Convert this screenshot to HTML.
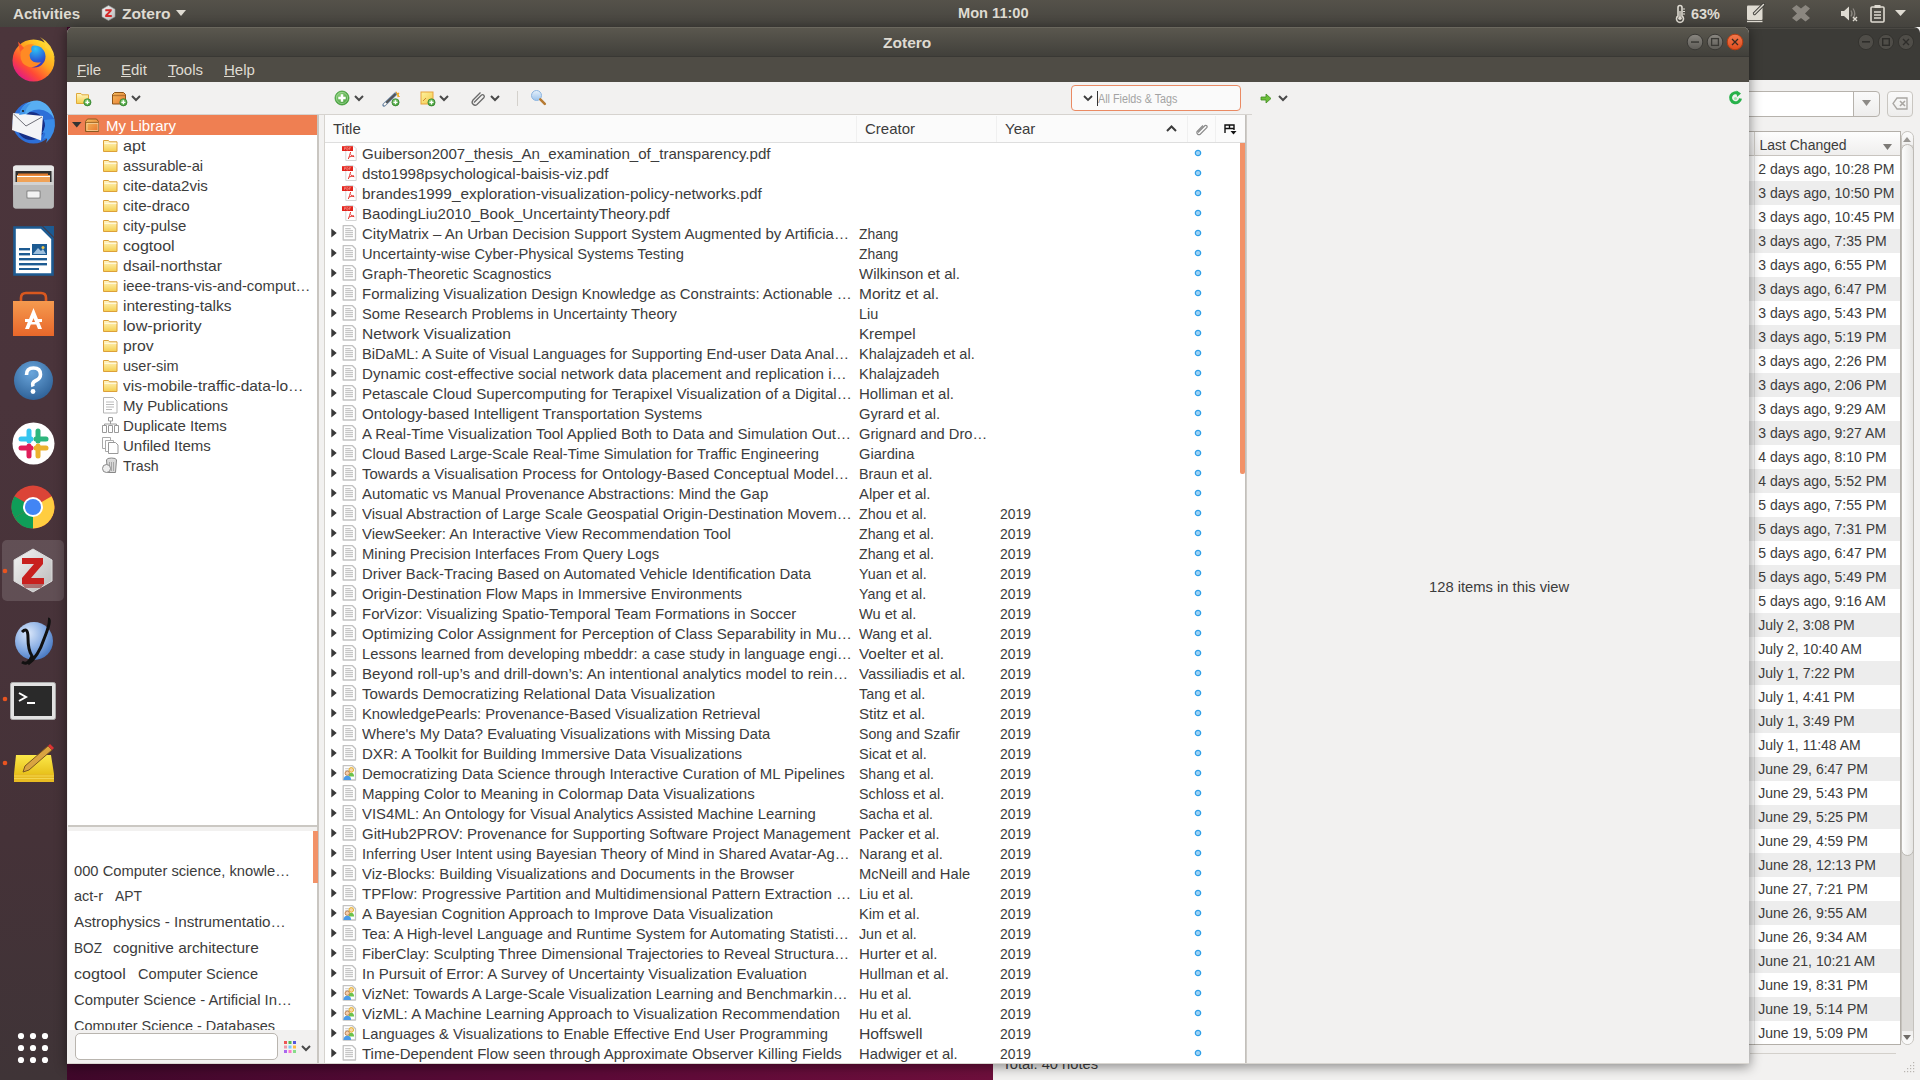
<!DOCTYPE html><html><head><meta charset="utf-8"><title>Zotero</title><style>
*{margin:0;padding:0;box-sizing:border-box}
html,body{width:1920px;height:1080px;overflow:hidden}
body{position:relative;font-family:"Liberation Sans", sans-serif;background:#2c0a1e}
.a{position:absolute}
.t{position:absolute;white-space:nowrap;line-height:1;transform-origin:0 0}
.ic{position:absolute;overflow:visible}
</style></head><body>
<svg width="0" height="0" style="position:absolute"><defs>
<linearGradient id="gFold" x1="0" y1="0" x2="0" y2="1"><stop offset="0" stop-color="#fff6c4"/><stop offset="1" stop-color="#f5cf4e"/></linearGradient>
<linearGradient id="gBox" x1="0" y1="0" x2="1" y2="1"><stop offset="0" stop-color="#f6c060"/><stop offset="1" stop-color="#e8752e"/></linearGradient>
<radialGradient id="gGreen" cx=".4" cy=".35" r=".7"><stop offset="0" stop-color="#8fd27e"/><stop offset="1" stop-color="#3e9a35"/></radialGradient>
<linearGradient id="gBtn" x1="0" y1="0" x2="0" y2="1"><stop offset="0" stop-color="#8a8781"/><stop offset="1" stop-color="#5d5b56"/></linearGradient>
<linearGradient id="gClose" x1="0" y1="0" x2="0" y2="1"><stop offset="0" stop-color="#f47a4e"/><stop offset="1" stop-color="#de4b1c"/></linearGradient>
<linearGradient id="gBtnBg" x1="0" y1="0" x2="0" y2="1"><stop offset="0" stop-color="#5e5c57"/><stop offset="1" stop-color="#4a4944"/></linearGradient>
<radialGradient id="gFF" cx=".75" cy=".2" r="1"><stop offset="0" stop-color="#fff44f"/><stop offset=".35" stop-color="#ff9a2e"/><stop offset=".7" stop-color="#ff3f3f"/><stop offset="1" stop-color="#c9178a"/></radialGradient>
<radialGradient id="gFFin" cx=".6" cy=".3" r=".8"><stop offset="0" stop-color="#3fbcf2"/><stop offset=".6" stop-color="#3a5ed9"/><stop offset="1" stop-color="#6a2bc7"/></radialGradient>
<radialGradient id="gTB" cx=".5" cy=".3" r=".8"><stop offset="0" stop-color="#9ad4ff"/><stop offset=".5" stop-color="#2f8ae6"/><stop offset="1" stop-color="#1c3a9a"/></radialGradient>
<linearGradient id="gCab" x1="0" y1="0" x2="0" y2="1"><stop offset="0" stop-color="#dedede"/><stop offset="1" stop-color="#9c9c9c"/></linearGradient>
<linearGradient id="gBag" x1="0" y1="0" x2="0" y2="1"><stop offset="0" stop-color="#f59a4f"/><stop offset="1" stop-color="#e8672a"/></linearGradient>
<radialGradient id="gHelp" cx=".45" cy=".3" r=".8"><stop offset="0" stop-color="#6aa6dc"/><stop offset="1" stop-color="#27598f"/></radialGradient>
<radialGradient id="gSph" cx=".35" cy=".3" r=".8"><stop offset="0" stop-color="#dbe8fb"/><stop offset=".6" stop-color="#7ea6e0"/><stop offset="1" stop-color="#3d6fbb"/></radialGradient>
<linearGradient id="gHex" x1="0" y1="0" x2="1" y2="1"><stop offset="0" stop-color="#f4f4f4"/><stop offset="1" stop-color="#b9b9b9"/></linearGradient>
<linearGradient id="gPad" x1="0" y1="0" x2="0" y2="1"><stop offset="0" stop-color="#fbe84a"/><stop offset="1" stop-color="#e8c21c"/></linearGradient>
<linearGradient id="gLens" x1="0" y1="0" x2="0" y2="1"><stop offset="0" stop-color="#e6f1fb"/><stop offset="1" stop-color="#9cc3ec"/></linearGradient>
<linearGradient id="gNote" x1="0" y1="0" x2="1" y2="1"><stop offset="0" stop-color="#fff3a0"/><stop offset="1" stop-color="#f1c94a"/></linearGradient>
</defs></svg>
<div class="a" style="left:0px;top:0px;width:1920px;height:1080px;background:linear-gradient(90deg,#3f082a 60px,#520a34 400px,#5d0a38 600px,#6e0f3c 993px,#6a1434 1920px);"></div>
<div class="a" style="left:993px;top:27px;width:927px;height:1053px;background:#f2f1f0;"></div>
<div class="a" style="left:993px;top:27px;width:927px;height:53px;background:#3c3b37;border-radius:6px 6px 0 0"></div>
<div class="a" style="left:997px;top:28px;width:919px;height:1px;background:#4a4843;"></div>
<svg class="ic" style="left:1857px;top:33px" width="18" height="18" viewBox="0 0 18 18"><circle cx="9" cy="9" r="7.6" fill="#4f4d48" stroke="#34332f" stroke-width="1"/></svg>
<svg class="ic" style="left:1877px;top:33px" width="18" height="18" viewBox="0 0 18 18"><circle cx="9" cy="9" r="7.6" fill="#4f4d48" stroke="#34332f" stroke-width="1"/></svg>
<svg class="ic" style="left:1897px;top:33px" width="18" height="18" viewBox="0 0 18 18"><circle cx="9" cy="9" r="7.6" fill="#4f4d48" stroke="#34332f" stroke-width="1"/></svg>
<svg class="ic" style="left:1862px;top:41px" width="8" height="2" viewBox="0 0 8 2"><rect width="8" height="1.6" fill="#2e2d2a"/></svg>
<svg class="ic" style="left:1882px;top:38px" width="8" height="8" viewBox="0 0 8 8"><rect x=".7" y=".7" width="6.6" height="6.6" fill="none" stroke="#2e2d2a" stroke-width="1.4"/></svg>
<svg class="ic" style="left:1902px;top:38px" width="8" height="8" viewBox="0 0 8 8"><path d="M1 1l6 6M7 1l-6 6" stroke="#2e2d2a" stroke-width="1.4"/></svg>
<div class="a" style="left:1700px;top:91px;width:154px;height:26px;background:#fff;border:1px solid #b6b2ac;border-right:none"></div>
<div class="a" style="left:1853px;top:91px;width:27px;height:26px;background:linear-gradient(#fafafa,#eeedec);border:1px solid #b6b2ac;border-radius:0 4px 4px 0"></div>
<svg class="ic" style="left:1862px;top:100px" width="9" height="7" viewBox="0 0 9 7"><path d="M0 0h9L4.5 6z" fill="#8c8a86"/></svg>
<div class="a" style="left:1887px;top:91px;width:26px;height:26px;background:linear-gradient(#fafafa,#eeedec);border:1px solid #c9c6c1;border-radius:4px"></div>
<svg class="ic" style="left:1892px;top:96px" width="16" height="15" viewBox="0 0 16 15"><path d="M5 2h10v11H5L1 7.5z" fill="none" stroke="#a9a6a2" stroke-width="1.3"/><path d="M8 5l5 5M13 5l-5 5" stroke="#a9a6a2" stroke-width="1.6"/></svg>
<div class="a" style="left:1700px;top:131px;width:201px;height:914px;background:#fff;border:1px solid #b3afa9"></div>
<div class="a" style="left:1701px;top:132px;width:199px;height:24px;background:linear-gradient(#fdfdfd,#efeeed);border-bottom:1px solid #c8c4bf"></div>
<div class="a" style="left:1754px;top:132px;width:1px;height:24px;background:#d2cfca;"></div>
<div class="t" style="left:1759.40px;top:137.95px;font-size:14px;color:#3c3c3c;">Last Changed</div>
<svg class="ic" style="left:1883px;top:144px" width="9" height="6" viewBox="0 0 9 6"><path d="M0 0h9L4.5 6z" fill="#7c7a76"/></svg>
<div class="t" style="left:1758.30px;top:162.05px;font-size:14px;color:#3c3c3c;">2 days ago, 10:28 PM</div>
<div class="a" style="left:1701px;top:181px;width:199px;height:24px;background:#ededed;"></div>
<div class="t" style="left:1758.30px;top:186.05px;font-size:14px;color:#3c3c3c;">3 days ago, 10:50 PM</div>
<div class="t" style="left:1758.30px;top:210.05px;font-size:14px;color:#3c3c3c;">3 days ago, 10:45 PM</div>
<div class="a" style="left:1701px;top:229px;width:199px;height:24px;background:#ededed;"></div>
<div class="t" style="left:1758.30px;top:234.05px;font-size:14px;color:#3c3c3c;">3 days ago, 7:35 PM</div>
<div class="t" style="left:1758.30px;top:258.05px;font-size:14px;color:#3c3c3c;">3 days ago, 6:55 PM</div>
<div class="a" style="left:1701px;top:277px;width:199px;height:24px;background:#ededed;"></div>
<div class="t" style="left:1758.30px;top:282.05px;font-size:14px;color:#3c3c3c;">3 days ago, 6:47 PM</div>
<div class="t" style="left:1758.30px;top:306.05px;font-size:14px;color:#3c3c3c;">3 days ago, 5:43 PM</div>
<div class="a" style="left:1701px;top:325px;width:199px;height:24px;background:#ededed;"></div>
<div class="t" style="left:1758.30px;top:330.05px;font-size:14px;color:#3c3c3c;">3 days ago, 5:19 PM</div>
<div class="t" style="left:1758.30px;top:354.05px;font-size:14px;color:#3c3c3c;">3 days ago, 2:26 PM</div>
<div class="a" style="left:1701px;top:373px;width:199px;height:24px;background:#ededed;"></div>
<div class="t" style="left:1758.30px;top:378.05px;font-size:14px;color:#3c3c3c;">3 days ago, 2:06 PM</div>
<div class="t" style="left:1758.30px;top:402.05px;font-size:14px;color:#3c3c3c;">3 days ago, 9:29 AM</div>
<div class="a" style="left:1701px;top:421px;width:199px;height:24px;background:#ededed;"></div>
<div class="t" style="left:1758.30px;top:426.05px;font-size:14px;color:#3c3c3c;">3 days ago, 9:27 AM</div>
<div class="t" style="left:1758.30px;top:450.05px;font-size:14px;color:#3c3c3c;">4 days ago, 8:10 PM</div>
<div class="a" style="left:1701px;top:469px;width:199px;height:24px;background:#ededed;"></div>
<div class="t" style="left:1758.30px;top:474.05px;font-size:14px;color:#3c3c3c;">4 days ago, 5:52 PM</div>
<div class="t" style="left:1758.30px;top:498.05px;font-size:14px;color:#3c3c3c;">5 days ago, 7:55 PM</div>
<div class="a" style="left:1701px;top:517px;width:199px;height:24px;background:#ededed;"></div>
<div class="t" style="left:1758.30px;top:522.05px;font-size:14px;color:#3c3c3c;">5 days ago, 7:31 PM</div>
<div class="t" style="left:1758.30px;top:546.05px;font-size:14px;color:#3c3c3c;">5 days ago, 6:47 PM</div>
<div class="a" style="left:1701px;top:565px;width:199px;height:24px;background:#ededed;"></div>
<div class="t" style="left:1758.30px;top:570.05px;font-size:14px;color:#3c3c3c;">5 days ago, 5:49 PM</div>
<div class="t" style="left:1758.30px;top:594.05px;font-size:14px;color:#3c3c3c;">5 days ago, 9:16 AM</div>
<div class="a" style="left:1701px;top:613px;width:199px;height:24px;background:#ededed;"></div>
<div class="t" style="left:1758.30px;top:618.05px;font-size:14px;color:#3c3c3c;">July 2, 3:08 PM</div>
<div class="t" style="left:1758.30px;top:642.05px;font-size:14px;color:#3c3c3c;">July 2, 10:40 AM</div>
<div class="a" style="left:1701px;top:661px;width:199px;height:24px;background:#ededed;"></div>
<div class="t" style="left:1758.30px;top:666.05px;font-size:14px;color:#3c3c3c;">July 1, 7:22 PM</div>
<div class="t" style="left:1758.30px;top:690.05px;font-size:14px;color:#3c3c3c;">July 1, 4:41 PM</div>
<div class="a" style="left:1701px;top:709px;width:199px;height:24px;background:#ededed;"></div>
<div class="t" style="left:1758.30px;top:714.05px;font-size:14px;color:#3c3c3c;">July 1, 3:49 PM</div>
<div class="t" style="left:1758.30px;top:738.05px;font-size:14px;color:#3c3c3c;">July 1, 11:48 AM</div>
<div class="a" style="left:1701px;top:757px;width:199px;height:24px;background:#ededed;"></div>
<div class="t" style="left:1758.30px;top:762.05px;font-size:14px;color:#3c3c3c;">June 29, 6:47 PM</div>
<div class="t" style="left:1758.30px;top:786.05px;font-size:14px;color:#3c3c3c;">June 29, 5:43 PM</div>
<div class="a" style="left:1701px;top:805px;width:199px;height:24px;background:#ededed;"></div>
<div class="t" style="left:1758.30px;top:810.05px;font-size:14px;color:#3c3c3c;">June 29, 5:25 PM</div>
<div class="t" style="left:1758.30px;top:834.05px;font-size:14px;color:#3c3c3c;">June 29, 4:59 PM</div>
<div class="a" style="left:1701px;top:853px;width:199px;height:24px;background:#ededed;"></div>
<div class="t" style="left:1758.30px;top:858.05px;font-size:14px;color:#3c3c3c;">June 28, 12:13 PM</div>
<div class="t" style="left:1758.30px;top:882.05px;font-size:14px;color:#3c3c3c;">June 27, 7:21 PM</div>
<div class="a" style="left:1701px;top:901px;width:199px;height:24px;background:#ededed;"></div>
<div class="t" style="left:1758.30px;top:906.05px;font-size:14px;color:#3c3c3c;">June 26, 9:55 AM</div>
<div class="t" style="left:1758.30px;top:930.05px;font-size:14px;color:#3c3c3c;">June 26, 9:34 AM</div>
<div class="a" style="left:1701px;top:949px;width:199px;height:24px;background:#ededed;"></div>
<div class="t" style="left:1758.30px;top:954.05px;font-size:14px;color:#3c3c3c;">June 21, 10:21 AM</div>
<div class="t" style="left:1758.30px;top:978.05px;font-size:14px;color:#3c3c3c;">June 19, 8:31 PM</div>
<div class="a" style="left:1701px;top:997px;width:199px;height:24px;background:#ededed;"></div>
<div class="t" style="left:1758.30px;top:1002.05px;font-size:14px;color:#3c3c3c;">June 19, 5:14 PM</div>
<div class="t" style="left:1758.30px;top:1026.05px;font-size:14px;color:#3c3c3c;">June 19, 5:09 PM</div>
<div class="a" style="left:1754px;top:156px;width:1px;height:889px;background:rgba(0,0,0,.08);"></div>
<div class="a" style="left:1901px;top:131px;width:13px;height:914px;background:#dcdad7;border:1px solid #c5c2bd;border-radius:7px"></div>
<div class="a" style="left:1902px;top:132px;width:11px;height:13px;background:linear-gradient(#fbfbfb,#f0efee);border-radius:6px 6px 0 0"></div>
<div class="a" style="left:1902px;top:1031px;width:11px;height:13px;background:linear-gradient(#f0efee,#fbfbfb);border-radius:0 0 6px 6px"></div>
<div class="a" style="left:1901px;top:144px;width:13px;height:712px;background:linear-gradient(90deg,#fdfdfd,#e6e5e3);border:1px solid #bdbab5;border-radius:7px"></div>
<svg class="ic" style="left:1903px;top:137px" width="8" height="5" viewBox="0 0 8 5"><path d="M0 5h8L4 0z" fill="#9a9793"/></svg>
<svg class="ic" style="left:1903px;top:1035px" width="8" height="5" viewBox="0 0 8 5"><path d="M0 0h8L4 5z" fill="#6f6c68"/></svg>
<div class="a" style="left:1750px;top:1053px;width:146px;height:1px;background:#d3d0cb;"></div>
<div class="t" style="left:1002.50px;top:1056.56px;font-size:14.7px;color:#3c3c3c;">Total: 40 notes</div>
<svg class="ic" style="left:1903px;top:1062px" width="11" height="11" viewBox="0 0 11 11"><rect x="10" y="0" width="1.2" height="1.2" fill="#b8b5b0"/><rect x="10" y="3" width="1.2" height="1.2" fill="#b8b5b0"/><rect x="7" y="3" width="1.2" height="1.2" fill="#b8b5b0"/><rect x="10" y="6" width="1.2" height="1.2" fill="#b8b5b0"/><rect x="7" y="6" width="1.2" height="1.2" fill="#b8b5b0"/><rect x="4" y="6" width="1.2" height="1.2" fill="#b8b5b0"/><rect x="10" y="9" width="1.2" height="1.2" fill="#b8b5b0"/><rect x="7" y="9" width="1.2" height="1.2" fill="#b8b5b0"/><rect x="4" y="9" width="1.2" height="1.2" fill="#b8b5b0"/><rect x="1" y="9" width="1.2" height="1.2" fill="#b8b5b0"/></svg>
<div class="a" style="left:0px;top:0px;width:1920px;height:27px;background:linear-gradient(#55524a,#45433e);"></div>
<div class="t" style="left:12.50px;top:5.80px;font-size:15px;color:#dfdbd2;font-weight:bold;transform:scaleX(1.0047);">Activities</div>
<svg class="ic" style="left:101px;top:5px" width="15" height="16" viewBox="0 0 15 16"><path d="M7.5 .5l6.5 3.7v7.6l-6.5 3.7L1 11.8V4.2z" fill="url(#gHex)" stroke="#9a9a9a" stroke-width=".6"/><path d="M4.3 4.3h6.4v1.8L7 10h3.8v1.9H4.2v-1.8L8 6.2H4.3z" fill="#d42a2a"/></svg>
<div class="t" style="left:122.00px;top:5.80px;font-size:15px;color:#dfdbd2;font-weight:bold;transform:scaleX(1.0394);">Zotero</div>
<svg class="ic" style="left:176px;top:10px" width="10" height="6" viewBox="0 0 10 6"><path d="M0 0h10L5 6z" fill="#dfdbd2"/></svg>
<div class="t" style="left:958.40px;top:4.80px;font-size:15px;color:#dfdbd2;font-weight:bold;transform:scaleX(0.9736);">Mon 11:00</div>
<svg class="ic" style="left:1674px;top:5px" width="12" height="17" viewBox="0 0 12 17"><path d="M4 2.5a2 2 0 0 1 4 0v8.5a3.5 3.5 0 1 1-4 0z" fill="none" stroke="#dfdbd2" stroke-width="1.6"/><circle cx="6" cy="13.3" r="1.8" fill="#dfdbd2"/><path d="M6 6v7" stroke="#dfdbd2" stroke-width="1.4"/><path d="M9 4h2M9 6.5h2M9 9h2" stroke="#dfdbd2" stroke-width="1"/></svg>
<div class="t" style="left:1691.00px;top:5.80px;font-size:15px;color:#dfdbd2;font-weight:bold;transform:scaleX(0.9660);">63%</div>
<svg class="ic" style="left:1746px;top:3px" width="20" height="19" viewBox="0 0 20 19"><rect x="1" y="2.5" width="15.5" height="14.5" rx="1" fill="#dfdbd2"/><rect x="1" y="17.8" width="15.5" height="1.4" fill="#dfdbd2"/><path d="M8.5 10.5l9-9" stroke="#3f3e3a" stroke-width="3.2" stroke-linecap="round"/><path d="M8.5 10.5l9-9" stroke="#dfdbd2" stroke-width="1.4" stroke-linecap="round"/></svg>
<svg class="ic" style="left:1792px;top:5px" width="18" height="17" viewBox="0 0 18 17"><path d="M0 3.5L4.5 0 9 3.5 13.5 0 18 3.5 13 8.5 18 13 13.5 16.5 9 13 4.5 16.5 0 13 5 8.5z" fill="#8b8780"/></svg>
<svg class="ic" style="left:1840px;top:5px" width="18" height="17" viewBox="0 0 18 17"><path d="M1 6h3l5-4.5v14L4 11H1z" fill="#dfdbd2"/><path d="M11 5.5q2 3 0 6M13 3.5q3.5 5 0 10" stroke="#8b8780" stroke-width="1.3" fill="none"/><path d="M13 12l4 4M17 12l-4 4" stroke="#dfdbd2" stroke-width="1.4"/></svg>
<svg class="ic" style="left:1870px;top:4px" width="15" height="18" viewBox="0 0 15 18"><rect x="1" y="3" width="13" height="15" rx="1" fill="none" stroke="#dfdbd2" stroke-width="1.6"/><rect x="4.5" y="1" width="6" height="3" fill="#dfdbd2"/><path d="M4 8h7M4 11h7M4 14h7" stroke="#dfdbd2" stroke-width="1.3"/></svg>
<svg class="ic" style="left:1895px;top:10px" width="11" height="6" viewBox="0 0 11 6"><path d="M0 0h11L5.5 6z" fill="#dfdbd2"/></svg>
<div class="a" style="left:0px;top:27px;width:67px;height:1053px;background:linear-gradient(#4b353b 0px,#4a343b 373px,#453238 813px,#3f3437 1053px);"></div>
<svg class="ic" style="left:11px;top:36px" width="44" height="45" viewBox="0 0 44 45"><defs><linearGradient id="gFF2" x1=".85" y1=".1" x2=".15" y2=".9"><stop offset="0" stop-color="#ffe02b"/><stop offset=".4" stop-color="#ffa21f"/><stop offset=".72" stop-color="#ff4a35"/><stop offset="1" stop-color="#e0178a"/></linearGradient>
<radialGradient id="gGlobe" cx=".55" cy=".15" r=".95"><stop offset="0" stop-color="#2ec5f7"/><stop offset=".55" stop-color="#2a5fd6"/><stop offset="1" stop-color="#4b1fa3"/></radialGradient></defs>
<circle cx="22.5" cy="24.5" r="21" fill="url(#gFF2)"/>
<circle cx="23.5" cy="20.5" r="11" fill="url(#gGlobe)"/>
<path d="M11 13Q15 7 23 8.5 18.5 11.5 21 15.5 17 17.5 19.5 23 23 28 30 26 26 32 18 31 9 28 9.5 19z" fill="#ff8a24"/>
<path d="M29 1Q42 8 44 23 41 14 34 11.5 35 6 29 1z" fill="#ffd23a"/>
<path d="M7 5.5L13 12 9 16z" fill="#ff5b2c"/></svg>
<svg class="ic" style="left:10px;top:98px" width="46" height="49" viewBox="0 0 46 49"><circle cx="23.5" cy="24.5" r="21" fill="#2d6fd8"/>
<circle cx="21" cy="28" r="14" fill="#172f86"/>
<path d="M9 17Q13 3 27 2.5 40 4 44.5 21 39 12 29 11.5 18 11.5 14 20z" fill="#58aef2"/>
<path d="M44.5 21Q47 35 36 45 39 38 33 41 38 33 32 35 37 28 34 22z" fill="#3a8ce8"/>
<path d="M3 15l30 3-2 24.5L2 32z" fill="#f4f4f6"/>
<path d="M3.5 16L16 28 32 19" fill="none" stroke="#6f6f78" stroke-width="1"/>
<path d="M9 17Q12 6 21 5 16 9 15 16z" fill="#3f94e8"/><circle cx="13" cy="13" r="1.1" fill="#222"/></svg>
<svg class="ic" style="left:12px;top:165px" width="43" height="44" viewBox="0 0 43 44"><rect x="1" y="0.5" width="41" height="43" rx="3" fill="url(#gCab)"/>
<rect x="1" y="0.5" width="41" height="6" rx="3" fill="#e9e9e9"/>
<rect x="3.5" y="6" width="36" height="11" fill="#2f2f2f"/>
<path d="M5 10h33v7H5z" fill="#f0a257"/><path d="M5 11.5h33" stroke="#fff" stroke-width="1.2"/><path d="M6 8.5h30v2H6z" fill="#e07a2e"/>
<path d="M1.5 17h40v24.5a2 2 0 0 1-2 2h-36a2 2 0 0 1-2-2z" fill="#b9b9b9"/>
<path d="M1.5 17h40v3h-40z" fill="#d2d2d2"/>
<rect x="14" y="25" width="15" height="9" rx="2" fill="#9a9a9a"/><rect x="15.5" y="26.5" width="12" height="6" rx="1" fill="#f2f2f2"/></svg>
<svg class="ic" style="left:13px;top:226px" width="42" height="50" viewBox="0 0 42 50"><path d="M1.5 1.5h27l11 11v36h-38z" fill="#fff" stroke="#1d5b92" stroke-width="2.6"/>
<path d="M30 0h11v11z" fill="#1d5b92"/>
<rect x="6" y="22" width="11" height="2.4" fill="#1d5b92"/><rect x="6" y="27" width="11" height="2.4" fill="#1d5b92"/>
<rect x="19" y="18" width="15" height="11" fill="#1d5b92"/><path d="M20 28l5-6 3 3 2-2 3 5z" fill="#9ec0de"/><circle cx="30" cy="21.5" r="1.5" fill="#f2c84b"/>
<rect x="6" y="32" width="28" height="2.4" fill="#1d5b92"/><rect x="6" y="37" width="28" height="2.4" fill="#1d5b92"/><rect x="6" y="42" width="20" height="2" fill="#1d5b92"/></svg>
<svg class="ic" style="left:12px;top:292px" width="43" height="45" viewBox="0 0 43 45"><path d="M9 10V6q0-5 5-5h15q5 0 5 5v4" fill="none" stroke="#d9581f" stroke-width="2.6"/>
<path d="M1 9h41v35H1z" fill="url(#gBag)"/>
<path d="M21.5 16L13 37h4l1.8-4.5h5.4L26 37h4z" fill="#fff"/><rect x="13" y="27" width="17" height="3" fill="#fff"/><path d="M20 30l1.5-4 1.5 4z" fill="url(#gBag)"/></svg>
<svg class="ic" style="left:13px;top:360px" width="41" height="41" viewBox="0 0 41 41"><circle cx="20.5" cy="20.5" r="19.5" fill="url(#gHelp)"/>
<path d="M13.5 15q0-7 7-7t7 6.5q0 4-4.5 6t-3 6" fill="none" stroke="#fff" stroke-width="3.6"/><circle cx="20" cy="31.5" r="2.4" fill="#fff"/></svg>
<svg class="ic" style="left:12px;top:422px" width="43" height="43" viewBox="0 0 43 43"><circle cx="21.5" cy="21.5" r="21" fill="#fff"/>
<g stroke-linecap="round" stroke-width="5">
<path d="M17 9v10" stroke="#36c5f0"/><path d="M9 17h10" stroke="#36c5f0"/>
<path d="M26 9v10" stroke="#2eb67d"/><path d="M34 17H24" stroke="#2eb67d"/>
<path d="M26 34V24" stroke="#ecb22e"/><path d="M34 26H24" stroke="#ecb22e"/>
<path d="M17 34V24" stroke="#e01e5a"/><path d="M9 26h10" stroke="#e01e5a"/></g></svg>
<svg class="ic" style="left:11px;top:485px" width="44" height="44" viewBox="0 0 44 44"><circle cx="22" cy="22" r="21.5" fill="#db4437"/>
<path d="M22 22L3.4 32.7A21.5 21.5 0 0 0 22 43.5z" fill="#0f9d58"/>
<path d="M22 22L3.4 32.7A21.5 21.5 0 0 1 3.4 11.3z" fill="#0f9d58"/>
<path d="M22 22h21.5A21.5 21.5 0 0 1 22 43.5z" fill="#ffcd40"/>
<path d="M22 22L40.6 11.3A21.5 21.5 0 0 1 43.5 22z" fill="#ffcd40"/>
<circle cx="22" cy="22" r="10" fill="#fff"/><circle cx="22" cy="22" r="8" fill="#4285f4"/></svg>
<div class="a" style="left:2px;top:540px;width:62px;height:61px;background:rgba(255,255,255,.14);border-radius:5px"></div>
<svg class="ic" style="left:13px;top:548px" width="40" height="45" viewBox="0 0 40 45"><path d="M20 1l19 11v21L20 44 1 33V12z" fill="url(#gHex)" stroke="#ddd" stroke-width="1"/>
<path d="M9 10h21v6L18 30h13v6H9v-6l12-14H9z" fill="#c8201e"/>
<path d="M9 36h22l-3 4H12z" fill="#8c1414" opacity=".5"/></svg>
<svg class="ic" style="left:14px;top:611px" width="42" height="55" viewBox="0 0 42 55"><circle cx="20" cy="30" r="19" fill="url(#gSph)"/>
<path d="M8 21q6-6 6 6t4 18q-4 10-10 6M34 8q4 0-4 20-6 18-16 25" fill="none" stroke="#111" stroke-width="3"/></svg>
<svg class="ic" style="left:10px;top:682px" width="46" height="38" viewBox="0 0 46 38"><rect x="0.5" y="0.5" width="45" height="37" rx="2" fill="#e2e2e2" stroke="#aaa"/>
<rect x="4" y="4" width="38" height="30" fill="#2a2a2a"/>
<path d="M9 11l7 4-7 4" stroke="#fff" stroke-width="2" fill="none"/><rect x="17" y="20" width="8" height="2" fill="#fff"/></svg>
<svg class="ic" style="left:13px;top:743px" width="42" height="40" viewBox="0 0 42 40"><path d="M3 12h35l3 19H1z" fill="url(#gPad)"/>
<rect x="1" y="31" width="40" height="8" fill="#e7bb22"/><path d="M1 33h40M1 35.5h40" stroke="#f6dd5c" stroke-width=".8"/>
<path d="M12 23L35 3l4 4-23 20-6 2z" fill="#d9a441" stroke="#7a5520" stroke-width="1"/><path d="M35 3l4 4 2-2-4-4z" fill="#d33"/></svg>
<svg class="ic" style="left:2px;top:568px" width="6" height="6" viewBox="0 0 6 6"><circle cx="3" cy="3" r="2.3" fill="#e95420"/></svg>
<svg class="ic" style="left:2px;top:696px" width="6" height="6" viewBox="0 0 6 6"><circle cx="3" cy="3" r="2.3" fill="#e95420"/></svg>
<svg class="ic" style="left:2px;top:760px" width="6" height="6" viewBox="0 0 6 6"><circle cx="3" cy="3" r="2.3" fill="#e95420"/></svg>
<svg class="ic" style="left:16px;top:1032px" width="34" height="32" viewBox="0 0 34 32"><circle cx="5" cy="4" r="3.1" fill="#fff"/><circle cx="5" cy="16" r="3.1" fill="#fff"/><circle cx="5" cy="28" r="3.1" fill="#fff"/><circle cx="17" cy="4" r="3.1" fill="#fff"/><circle cx="17" cy="16" r="3.1" fill="#fff"/><circle cx="17" cy="28" r="3.1" fill="#fff"/><circle cx="29" cy="4" r="3.1" fill="#fff"/><circle cx="29" cy="16" r="3.1" fill="#fff"/><circle cx="29" cy="28" r="3.1" fill="#fff"/></svg>
<div class="a" style="left:67px;top:27px;width:1682px;height:1037px;background:#f2f1f0;border-radius:6px 6px 0 0;box-shadow:0 2px 12px 1px rgba(0,0,0,.42)"></div>
<div class="a" style="left:67px;top:1063px;width:1682px;height:1px;background:#d9d6d1;"></div>
<div class="a" style="left:67px;top:27px;width:1682px;height:30px;background:linear-gradient(#5b584f,#403f3a);border-radius:6px 6px 0 0"></div>
<div class="a" style="left:71px;top:27px;width:1674px;height:1px;background:#6a675d;"></div>
<div class="t" style="left:883.00px;top:34.80px;font-size:15px;color:#dfdbd2;font-weight:bold;transform:scaleX(1.0352);">Zotero</div>
<svg class="ic" style="left:1686px;top:33px" width="18" height="18" viewBox="0 0 18 18"><circle cx="9" cy="9" r="7.8" fill="url(#gBtn)" stroke="#3a3935" stroke-width="1"/><rect x="5" y="8.3" width="8" height="1.5" fill="#3a3935"/></svg>
<svg class="ic" style="left:1706px;top:33px" width="18" height="18" viewBox="0 0 18 18"><circle cx="9" cy="9" r="7.8" fill="url(#gBtn)" stroke="#3a3935" stroke-width="1"/><rect x="5.6" y="5.6" width="6.8" height="6.8" fill="none" stroke="#3a3935" stroke-width="1.3"/></svg>
<svg class="ic" style="left:1726px;top:33px" width="18" height="18" viewBox="0 0 18 18"><circle cx="9" cy="9" r="7.8" fill="url(#gClose)" stroke="#b33c12" stroke-width="1"/><path d="M6 6l6 6M12 6l-6 6" stroke="#3a2a20" stroke-width="1.3"/></svg>
<div class="a" style="left:67px;top:56px;width:1682px;height:1px;background:#393834;"></div>
<div class="a" style="left:67px;top:57px;width:1682px;height:25px;background:#4f4c45;"></div>
<div class="t" style="left:77.00px;top:62.30px;font-size:15px;color:#dfdbd2;"><u>F</u>ile</div>
<div class="t" style="left:121.00px;top:62.30px;font-size:15px;color:#dfdbd2;"><u>E</u>dit</div>
<div class="t" style="left:168.00px;top:62.30px;font-size:15px;color:#dfdbd2;"><u>T</u>ools</div>
<div class="t" style="left:224.00px;top:62.30px;font-size:15px;color:#dfdbd2;"><u>H</u>elp</div>
<div class="a" style="left:67px;top:82px;width:1682px;height:33px;background:#f2f1f0;"></div>
<div class="a" style="left:67px;top:114px;width:1185px;height:1px;background:#d6d3cf;"></div>
<svg class="ic" style="left:75px;top:91px" width="18" height="16" viewBox="0 0 18 16"><path d="M1.5 2.5h4.5l1 1.3h6.5v8.7h-12z" fill="url(#gFold)" stroke="#e0a93a" stroke-width="1"/><circle cx="12.4" cy="11.3" r="3.6" fill="url(#gGreen)" stroke="#2e7d28" stroke-width=".7"/><path d="M12.4 9.3v4M10.4 11.3h4" stroke="#fff" stroke-width="1.3"/></svg>
<svg class="ic" style="left:110px;top:91px" width="20" height="16" viewBox="0 0 20 16"><path d="M2.5 3.5l2-2h9l2 2v9.5h-13z" fill="url(#gBox)" stroke="#8e5418" stroke-width="1"/><path d="M3 4.5h12" stroke="#b87430" stroke-width="1.4"/><circle cx="13.4" cy="11.3" r="3.6" fill="url(#gGreen)" stroke="#2e7d28" stroke-width=".7"/><path d="M13.4 9.3v4M11.4 11.3h4" stroke="#fff" stroke-width="1.3"/></svg>
<svg class="ic" style="left:131px;top:95px" width="10" height="7" viewBox="0 0 10 7"><path d="M1 1l4 4 4-4" stroke="#4a4a4a" stroke-width="2" fill="none"/></svg>
<svg class="ic" style="left:334px;top:90px" width="16" height="16" viewBox="0 0 16 16"><circle cx="8" cy="8" r="7" fill="url(#gGreen)" stroke="#3c9a34" stroke-width=".8"/><circle cx="8" cy="8" r="5.6" fill="none" stroke="#c8ecc0" stroke-width=".5"/><path d="M8 4.3v7.4M4.3 8h7.4" stroke="#fff" stroke-width="2.4"/></svg>
<svg class="ic" style="left:354px;top:95px" width="10" height="7" viewBox="0 0 10 7"><path d="M1 1l4 4 4-4" stroke="#4a4a4a" stroke-width="2" fill="none"/></svg>
<svg class="ic" style="left:382px;top:90px" width="18" height="17" viewBox="0 0 18 17"><path d="M2 15l11.5-11" stroke="#6b88a8" stroke-width="3.4" stroke-linecap="round"/><path d="M2 15l11.5-11" stroke="#555" stroke-width="2"/><path d="M2 15l2.2-2.1" stroke="#fff" stroke-width="2"/><path d="M14 1.5l1 2 2-.5-1 2 1.5 1.5-2 .3" fill="#f6c21f" stroke="#f29a16" stroke-width=".8"/><circle cx="13.5" cy="12.3" r="3.6" fill="url(#gGreen)" stroke="#2e7d28" stroke-width=".7"/><path d="M13.5 10.3v4M11.5 12.3h4" stroke="#fff" stroke-width="1.3"/></svg>
<svg class="ic" style="left:420px;top:91px" width="16" height="16" viewBox="0 0 16 16"><rect x="1" y="1" width="12" height="12" fill="url(#gNote)" stroke="#e8a33a" stroke-width="1"/><path d="M3 10l3-3" stroke="#d08a30" stroke-width="1"/><circle cx="11.5" cy="11.4" r="3.6" fill="url(#gGreen)" stroke="#2e7d28" stroke-width=".7"/><path d="M11.5 9.4v4M9.5 11.4h4" stroke="#fff" stroke-width="1.3"/></svg>
<svg class="ic" style="left:439px;top:95px" width="10" height="7" viewBox="0 0 10 7"><path d="M1 1l4 4 4-4" stroke="#4a4a4a" stroke-width="2" fill="none"/></svg>
<svg class="ic" style="left:471px;top:90px" width="16" height="16" viewBox="0 0 16 16"><path d="M3 12.5l7.5-7.5a1.8 1.8 0 0 1 2.5 2.5L6 14.5a3 3 0 0 1-4.2-4.2L9.5 2.5" fill="none" stroke="#6a6a6a" stroke-width="1.3"/></svg>
<svg class="ic" style="left:490px;top:95px" width="10" height="7" viewBox="0 0 10 7"><path d="M1 1l4 4 4-4" stroke="#4a4a4a" stroke-width="2" fill="none"/></svg>
<div class="a" style="left:517px;top:91px;width:1px;height:15px;background:#d4d1cc;"></div>
<svg class="ic" style="left:530px;top:89px" width="17" height="17" viewBox="0 0 17 17"><circle cx="6.5" cy="6.5" r="5" fill="url(#gLens)" stroke="#8db5e0" stroke-width="1"/><path d="M10.3 10.3l4.5 4.5" stroke="#b67a32" stroke-width="2.6" stroke-linecap="round"/></svg>
<div class="a" style="left:1071px;top:85px;width:170px;height:26px;background:#fafafa;border:1px solid #ea8a63;border-radius:4px"></div>
<svg class="ic" style="left:1083px;top:95px" width="10" height="7" viewBox="0 0 10 7"><path d="M1 1l4 4 4-4" stroke="#3c3c3c" stroke-width="1.8" fill="none"/></svg>
<div class="a" style="left:1097px;top:91px;width:1px;height:15px;background:#333;"></div>
<div class="t" style="left:1098.00px;top:92.84px;font-size:12px;color:#a3a3a3;transform:scaleX(0.8985);">All Fields &amp; Tags</div>
<svg class="ic" style="left:1260px;top:93px" width="12" height="11" viewBox="0 0 12 11"><path d="M1 4h5V1l5 4.5L6 10V7H1z" fill="#6cbf3a" stroke="#3f8a1f" stroke-width=".8"/></svg>
<svg class="ic" style="left:1278px;top:95px" width="10" height="7" viewBox="0 0 10 7"><path d="M1 1l4 4 4-4" stroke="#4a4a4a" stroke-width="2" fill="none"/></svg>
<svg class="ic" style="left:1729px;top:90px" width="14" height="16" viewBox="0 0 14 16"><path d="M11.5 8.5a5 5 0 1 1-2-4.8" fill="none" stroke="#27b14a" stroke-width="3"/><path d="M7.5 0.5l4.5 3-4 3.5z" fill="#27b14a"/><circle cx="6.5" cy="8.5" r="1.6" fill="#a6e3b0"/></svg>
<div class="a" style="left:68px;top:115px;width:249px;height:710px;background:#fff;"></div>
<div class="a" style="left:68px;top:115px;width:249px;height:20px;background:#ef7f52;"></div>
<svg class="ic" style="left:72px;top:122px" width="10" height="6" viewBox="0 0 10 6"><path d="M0 0h9.5L4.75 5.5z" fill="#333"/></svg>
<svg class="ic" style="left:84px;top:118px" width="17" height="15" viewBox="0 0 17 15"><path d="M1.5 3.5l2-2.5h9l2 2.5v10h-13z" fill="url(#gBox)" stroke="#8a5a22" stroke-width="1"/><path d="M2 4.5h13" stroke="#a9702e" stroke-width="1.3"/><rect x="3" y="5.5" width="11" height="7" fill="none" stroke="#f8d9a8" stroke-width=".7"/></svg>
<div class="t" style="left:105.70px;top:118.20px;font-size:15px;color:#fff;transform:scaleX(0.9999);">My Library</div>
<svg class="ic" style="left:103px;top:138px" width="15" height="14" viewBox="0 0 15 14"><path d="M.5 2.5h5l1 1.3h7.5v9.7H.5z" fill="url(#gFold)" stroke="#dca03a" stroke-width="1"/><path d="M1.5 5.3h12" stroke="#fffbe6" stroke-width="1"/></svg>
<div class="t" style="left:123.30px;top:138.20px;font-size:15px;color:#3c3c3c;transform:scaleX(1.0839);">apt</div>
<svg class="ic" style="left:103px;top:158px" width="15" height="14" viewBox="0 0 15 14"><path d="M.5 2.5h5l1 1.3h7.5v9.7H.5z" fill="url(#gFold)" stroke="#dca03a" stroke-width="1"/><path d="M1.5 5.3h12" stroke="#fffbe6" stroke-width="1"/></svg>
<div class="t" style="left:123.30px;top:158.20px;font-size:15px;color:#3c3c3c;transform:scaleX(0.9804);">assurable-ai</div>
<svg class="ic" style="left:103px;top:178px" width="15" height="14" viewBox="0 0 15 14"><path d="M.5 2.5h5l1 1.3h7.5v9.7H.5z" fill="url(#gFold)" stroke="#dca03a" stroke-width="1"/><path d="M1.5 5.3h12" stroke="#fffbe6" stroke-width="1"/></svg>
<div class="t" style="left:123.30px;top:178.20px;font-size:15px;color:#3c3c3c;transform:scaleX(1.0083);">cite-data2vis</div>
<svg class="ic" style="left:103px;top:198px" width="15" height="14" viewBox="0 0 15 14"><path d="M.5 2.5h5l1 1.3h7.5v9.7H.5z" fill="url(#gFold)" stroke="#dca03a" stroke-width="1"/><path d="M1.5 5.3h12" stroke="#fffbe6" stroke-width="1"/></svg>
<div class="t" style="left:123.30px;top:198.20px;font-size:15px;color:#3c3c3c;transform:scaleX(1.0113);">cite-draco</div>
<svg class="ic" style="left:103px;top:218px" width="15" height="14" viewBox="0 0 15 14"><path d="M.5 2.5h5l1 1.3h7.5v9.7H.5z" fill="url(#gFold)" stroke="#dca03a" stroke-width="1"/><path d="M1.5 5.3h12" stroke="#fffbe6" stroke-width="1"/></svg>
<div class="t" style="left:123.30px;top:218.20px;font-size:15px;color:#3c3c3c;transform:scaleX(0.9976);">city-pulse</div>
<svg class="ic" style="left:103px;top:238px" width="15" height="14" viewBox="0 0 15 14"><path d="M.5 2.5h5l1 1.3h7.5v9.7H.5z" fill="url(#gFold)" stroke="#dca03a" stroke-width="1"/><path d="M1.5 5.3h12" stroke="#fffbe6" stroke-width="1"/></svg>
<div class="t" style="left:123.30px;top:238.20px;font-size:15px;color:#3c3c3c;transform:scaleX(1.0669);">cogtool</div>
<svg class="ic" style="left:103px;top:258px" width="15" height="14" viewBox="0 0 15 14"><path d="M.5 2.5h5l1 1.3h7.5v9.7H.5z" fill="url(#gFold)" stroke="#dca03a" stroke-width="1"/><path d="M1.5 5.3h12" stroke="#fffbe6" stroke-width="1"/></svg>
<div class="t" style="left:123.30px;top:258.20px;font-size:15px;color:#3c3c3c;transform:scaleX(1.0407);">dsail-northstar</div>
<svg class="ic" style="left:103px;top:278px" width="15" height="14" viewBox="0 0 15 14"><path d="M.5 2.5h5l1 1.3h7.5v9.7H.5z" fill="url(#gFold)" stroke="#dca03a" stroke-width="1"/><path d="M1.5 5.3h12" stroke="#fffbe6" stroke-width="1"/></svg>
<div class="t" style="left:123.30px;top:278.20px;font-size:15px;color:#3c3c3c;transform:scaleX(0.9904);">ieee-trans-vis-and-comput…</div>
<svg class="ic" style="left:103px;top:298px" width="15" height="14" viewBox="0 0 15 14"><path d="M.5 2.5h5l1 1.3h7.5v9.7H.5z" fill="url(#gFold)" stroke="#dca03a" stroke-width="1"/><path d="M1.5 5.3h12" stroke="#fffbe6" stroke-width="1"/></svg>
<div class="t" style="left:123.30px;top:298.20px;font-size:15px;color:#3c3c3c;transform:scaleX(1.0330);">interesting-talks</div>
<svg class="ic" style="left:103px;top:318px" width="15" height="14" viewBox="0 0 15 14"><path d="M.5 2.5h5l1 1.3h7.5v9.7H.5z" fill="url(#gFold)" stroke="#dca03a" stroke-width="1"/><path d="M1.5 5.3h12" stroke="#fffbe6" stroke-width="1"/></svg>
<div class="t" style="left:123.30px;top:318.20px;font-size:15px;color:#3c3c3c;transform:scaleX(1.0827);">low-priority</div>
<svg class="ic" style="left:103px;top:338px" width="15" height="14" viewBox="0 0 15 14"><path d="M.5 2.5h5l1 1.3h7.5v9.7H.5z" fill="url(#gFold)" stroke="#dca03a" stroke-width="1"/><path d="M1.5 5.3h12" stroke="#fffbe6" stroke-width="1"/></svg>
<div class="t" style="left:123.30px;top:338.20px;font-size:15px;color:#3c3c3c;transform:scaleX(1.0522);">prov</div>
<svg class="ic" style="left:103px;top:358px" width="15" height="14" viewBox="0 0 15 14"><path d="M.5 2.5h5l1 1.3h7.5v9.7H.5z" fill="url(#gFold)" stroke="#dca03a" stroke-width="1"/><path d="M1.5 5.3h12" stroke="#fffbe6" stroke-width="1"/></svg>
<div class="t" style="left:123.30px;top:358.20px;font-size:15px;color:#3c3c3c;transform:scaleX(0.9670);">user-sim</div>
<svg class="ic" style="left:103px;top:378px" width="15" height="14" viewBox="0 0 15 14"><path d="M.5 2.5h5l1 1.3h7.5v9.7H.5z" fill="url(#gFold)" stroke="#dca03a" stroke-width="1"/><path d="M1.5 5.3h12" stroke="#fffbe6" stroke-width="1"/></svg>
<div class="t" style="left:123.30px;top:378.20px;font-size:15px;color:#3c3c3c;transform:scaleX(1.0328);">vis-mobile-traffic-data-lo…</div>
<svg class="ic" style="left:103px;top:397px" width="15" height="17" viewBox="0 0 15 17"><path d="M.5 .5h10l3.5 3.5v12H.5z" fill="#fff" stroke="#b5b5b5"/><path d="M3 5h8M3 7.5h8M3 10h8M3 12.5h6" stroke="#bbb" stroke-width="1"/></svg>
<div class="t" style="left:123.30px;top:398.20px;font-size:15px;color:#3c3c3c;transform:scaleX(0.9987);">My Publications</div>
<svg class="ic" style="left:102px;top:417px" width="17" height="16" viewBox="0 0 17 16"><path d="M6.5 .5h4v3.5h-4zM.5 8.5h4v7h-4zM6.5 8.5h4v7h-4zM12.5 8.5h4v7h-4z" fill="#fff" stroke="#9a9a9a"/><path d="M8.5 4v3M2.5 8.5V7h12v1.5" stroke="#9a9a9a" fill="none"/></svg>
<div class="t" style="left:123.30px;top:418.20px;font-size:15px;color:#3c3c3c;transform:scaleX(1.0042);">Duplicate Items</div>
<svg class="ic" style="left:102px;top:437px" width="17" height="17" viewBox="0 0 17 17"><path d="M.5 .5h8v11h-8z" fill="#fff" stroke="#aaa"/><path d="M3.5 3.5h8v11h-8z" fill="#fff" stroke="#aaa"/><path d="M6.5 5.5h7l2.5 2.5v8.5h-9.5z" fill="#fff" stroke="#999"/></svg>
<div class="t" style="left:123.30px;top:438.20px;font-size:15px;color:#3c3c3c;transform:scaleX(1.0031);">Unfiled Items</div>
<svg class="ic" style="left:102px;top:457px" width="16" height="17" viewBox="0 0 16 17"><ellipse cx="9.5" cy="3" rx="5" ry="2" fill="#ddd" stroke="#888"/><path d="M4.5 3l1 12.5h8l1-12.5" fill="#d8d8d8" stroke="#888"/><path d="M7.5 5v9M9.5 5v9M11.5 5v9" stroke="#999" stroke-width=".8"/><circle cx="4.5" cy="11.5" r="4" fill="#eee" stroke="#888"/></svg>
<div class="t" style="left:123.30px;top:458.20px;font-size:15px;color:#3c3c3c;transform:scaleX(0.9422);">Trash</div>
<div class="a" style="left:317px;top:115px;width:2px;height:948px;background:#c9c6c1;"></div>
<div class="a" style="left:319px;top:115px;width:5px;height:948px;background:#f2f1f0;"></div>
<div class="a" style="left:324px;top:115px;width:1px;height:948px;background:#d6d3ce;"></div>
<div class="a" style="left:68px;top:825px;width:249px;height:2px;background:#cbc8c3;"></div>
<div class="a" style="left:68px;top:827px;width:249px;height:4px;background:#f2f1f0;"></div>
<div class="a" style="left:68px;top:831px;width:249px;height:199px;background:#fff;"></div>
<div class="t" style="left:74.00px;top:862.80px;font-size:15px;color:#3c3c3c;transform:scaleX(0.9814);">000 Computer science, knowle…</div>
<div class="t" style="left:74.00px;top:888.30px;font-size:15px;color:#3c3c3c;transform:scaleX(0.9667);">act-r</div>
<div class="t" style="left:115.00px;top:888.30px;font-size:15px;color:#3c3c3c;transform:scaleX(0.9255);">APT</div>
<div class="t" style="left:74.00px;top:914.30px;font-size:15px;color:#3c3c3c;transform:scaleX(1.0161);">Astrophysics - Instrumentatio…</div>
<div class="t" style="left:74.00px;top:940.30px;font-size:15px;color:#3c3c3c;transform:scaleX(0.9081);">BOZ</div>
<div class="t" style="left:113.00px;top:940.30px;font-size:15px;color:#3c3c3c;transform:scaleX(1.0284);">cognitive architecture</div>
<div class="t" style="left:74.00px;top:966.30px;font-size:15px;color:#3c3c3c;transform:scaleX(1.0700);">cogtool</div>
<div class="t" style="left:137.50px;top:966.30px;font-size:15px;color:#3c3c3c;transform:scaleX(0.9726);">Computer Science</div>
<div class="t" style="left:74.00px;top:992.30px;font-size:15px;color:#3c3c3c;transform:scaleX(0.9895);">Computer Science - Artificial In…</div>
<div class="a" style="left:68px;top:1010px;width:249px;height:20px;overflow:hidden">
<div class="t" style="left:6px;top:8.30px;font-size:15px;color:#3c3c3c;transform:scaleX(0.9644)">Computer Science - Databases</div>
</div>
<div class="a" style="left:313px;top:831px;width:5px;height:52px;background:#f29268;"></div>
<div class="a" style="left:68px;top:1030px;width:249px;height:33px;background:#f2f1f0;"></div>
<div class="a" style="left:75px;top:1033px;width:203px;height:27px;background:#fff;border:1px solid #b9b5af;border-radius:5px"></div>
<svg class="ic" style="left:284px;top:1041px" width="12" height="12" viewBox="0 0 12 12"><rect x="0" y="0" width="3" height="3" fill="#e55"/><rect x="4.5" y="0" width="3" height="3" fill="#5b5"/><rect x="9" y="0" width="3" height="3" fill="#55d"/><rect x="0" y="4.5" width="3" height="3" fill="#e9a"/><rect x="4.5" y="4.5" width="3" height="3" fill="#7cf"/><rect x="9" y="4.5" width="3" height="3" fill="#fb4"/><rect x="0" y="9" width="3" height="3" fill="#a6e"/><rect x="4.5" y="9" width="3" height="3" fill="#f7c"/><rect x="9" y="9" width="3" height="3" fill="#8d8"/></svg>
<svg class="ic" style="left:301px;top:1045px" width="10" height="7" viewBox="0 0 10 7"><path d="M1 1l4 4 4-4" stroke="#4a4a4a" stroke-width="2" fill="none"/></svg>
<div class="a" style="left:325px;top:115px;width:920px;height:948px;background:#fff;"></div>
<div class="a" style="left:325px;top:115px;width:920px;height:27px;background:#fbfbfb;"></div>
<div class="a" style="left:325px;top:142px;width:920px;height:1px;background:#dedede;"></div>
<div class="t" style="left:333.00px;top:121.30px;font-size:15px;color:#3c3c3c;">Title</div>
<div class="t" style="left:865.00px;top:121.30px;font-size:15px;color:#3c3c3c;">Creator</div>
<div class="t" style="left:1005.00px;top:121.30px;font-size:15px;color:#3c3c3c;">Year</div>
<div class="a" style="left:856px;top:116px;width:1px;height:26px;background:#f0f0f0;"></div>
<div class="a" style="left:996px;top:116px;width:1px;height:26px;background:#f0f0f0;"></div>
<div class="a" style="left:1187px;top:116px;width:1px;height:26px;background:#f0f0f0;"></div>
<div class="a" style="left:1215px;top:116px;width:1px;height:26px;background:#f0f0f0;"></div>
<svg class="ic" style="left:1166px;top:125px" width="11" height="7" viewBox="0 0 11 7"><path d="M1 6l4.5-4.5L10 6" stroke="#3c3c3c" stroke-width="2" fill="none"/></svg>
<svg class="ic" style="left:1196px;top:122px" width="12" height="12" viewBox="0 0 12 12"><path d="M2 10.5l7-7a1.5 1.5 0 0 1 2 2l-7 7a2.3 2.3 0 0 1-3-3l6-6" fill="none" stroke="#8a8a8a" stroke-width="1.2"/></svg>
<svg class="ic" style="left:1224px;top:124px" width="13" height="11" viewBox="0 0 13 11"><path d="M1 9V1h9v5M1 4.5h9M5.5 1v4" stroke="#111" stroke-width="1.4" fill="none"/><path d="M6.5 7h6L9.5 10.5z" fill="#111"/></svg>
<div class="a" style="left:1245px;top:115px;width:2px;height:948px;background:linear-gradient(90deg,#bcb9b4,#d6d3cf);"></div>
<div class="a" style="left:1240px;top:143px;width:5px;height:331px;background:#f29268;border-radius:0 0 2px 2px"></div>
<div class="a" style="left:325px;top:143px;width:915px;height:920px;overflow:hidden">
<svg class="ic" style="left:17px;top:2px" width="16" height="17" viewBox="0 0 16 17"><path d="M3.8 .7h7.4l3 3v11.8H3.8z" fill="#fff" stroke="#d6d6d6" stroke-width="1"/><rect x="0" y="1.2" width="11" height="4.8" fill="#e3231b"/><path d="M2.4 5V2.5h1.1v1.2H2.4M4.8 5V2.5h.7l.7.6v1.3l-.7.6zM7.3 5V2.5h1.5M7.3 3.7h1.2" stroke="#f7b7b3" stroke-width=".5" fill="none"/><path d="M6.3 14Q7.6 11 8.6 7M8.6 9.5Q10 11.5 12.3 11.8M7.3 12L11.8 10.6" stroke="#e3231b" stroke-width=".9" fill="none"/></svg>
<div class="t" style="left:36.80px;top:3.20px;font-size:15px;color:#3c3c3c;transform:scaleX(1.0067);">Guiberson2007_thesis_An_examination_of_transparency.pdf</div>
<svg class="ic" style="left:869px;top:6px" width="8" height="8" viewBox="0 0 8 8"><circle cx="4" cy="4" r="2.7" fill="#9fd3f5" stroke="#2d9ee8" stroke-width="1.2"/></svg>
<svg class="ic" style="left:17px;top:22px" width="16" height="17" viewBox="0 0 16 17"><path d="M3.8 .7h7.4l3 3v11.8H3.8z" fill="#fff" stroke="#d6d6d6" stroke-width="1"/><rect x="0" y="1.2" width="11" height="4.8" fill="#e3231b"/><path d="M2.4 5V2.5h1.1v1.2H2.4M4.8 5V2.5h.7l.7.6v1.3l-.7.6zM7.3 5V2.5h1.5M7.3 3.7h1.2" stroke="#f7b7b3" stroke-width=".5" fill="none"/><path d="M6.3 14Q7.6 11 8.6 7M8.6 9.5Q10 11.5 12.3 11.8M7.3 12L11.8 10.6" stroke="#e3231b" stroke-width=".9" fill="none"/></svg>
<div class="t" style="left:36.80px;top:23.20px;font-size:15px;color:#3c3c3c;transform:scaleX(1.0125);">dsto1998psychological-baisis-viz.pdf</div>
<svg class="ic" style="left:869px;top:26px" width="8" height="8" viewBox="0 0 8 8"><circle cx="4" cy="4" r="2.7" fill="#9fd3f5" stroke="#2d9ee8" stroke-width="1.2"/></svg>
<svg class="ic" style="left:17px;top:42px" width="16" height="17" viewBox="0 0 16 17"><path d="M3.8 .7h7.4l3 3v11.8H3.8z" fill="#fff" stroke="#d6d6d6" stroke-width="1"/><rect x="0" y="1.2" width="11" height="4.8" fill="#e3231b"/><path d="M2.4 5V2.5h1.1v1.2H2.4M4.8 5V2.5h.7l.7.6v1.3l-.7.6zM7.3 5V2.5h1.5M7.3 3.7h1.2" stroke="#f7b7b3" stroke-width=".5" fill="none"/><path d="M6.3 14Q7.6 11 8.6 7M8.6 9.5Q10 11.5 12.3 11.8M7.3 12L11.8 10.6" stroke="#e3231b" stroke-width=".9" fill="none"/></svg>
<div class="t" style="left:36.80px;top:43.20px;font-size:15px;color:#3c3c3c;transform:scaleX(1.0266);">brandes1999_exploration-visualization-policy-networks.pdf</div>
<svg class="ic" style="left:869px;top:46px" width="8" height="8" viewBox="0 0 8 8"><circle cx="4" cy="4" r="2.7" fill="#9fd3f5" stroke="#2d9ee8" stroke-width="1.2"/></svg>
<svg class="ic" style="left:17px;top:62px" width="16" height="17" viewBox="0 0 16 17"><path d="M3.8 .7h7.4l3 3v11.8H3.8z" fill="#fff" stroke="#d6d6d6" stroke-width="1"/><rect x="0" y="1.2" width="11" height="4.8" fill="#e3231b"/><path d="M2.4 5V2.5h1.1v1.2H2.4M4.8 5V2.5h.7l.7.6v1.3l-.7.6zM7.3 5V2.5h1.5M7.3 3.7h1.2" stroke="#f7b7b3" stroke-width=".5" fill="none"/><path d="M6.3 14Q7.6 11 8.6 7M8.6 9.5Q10 11.5 12.3 11.8M7.3 12L11.8 10.6" stroke="#e3231b" stroke-width=".9" fill="none"/></svg>
<div class="t" style="left:36.80px;top:63.20px;font-size:15px;color:#3c3c3c;transform:scaleX(1.0064);">BaodingLiu2010_Book_UncertaintyTheory.pdf</div>
<svg class="ic" style="left:869px;top:66px" width="8" height="8" viewBox="0 0 8 8"><circle cx="4" cy="4" r="2.7" fill="#9fd3f5" stroke="#2d9ee8" stroke-width="1.2"/></svg>
<svg class="ic" style="left:6px;top:85px" width="7" height="10" viewBox="0 0 7 10"><path d="M.3 .5l5.4 4.5-5.4 4.5z" fill="#383838"/></svg>
<svg class="ic" style="left:17px;top:82px" width="16" height="17" viewBox="0 0 16 17"><path d="M1.2 .7h9.3l3 3v11.3H1.2z" fill="#fff" stroke="#c2c2c2" stroke-width="1.3" stroke-linejoin="round"/><path d="M3.2 3.7h5.5M3.2 5.7h7.8M3.2 7.7h7.8M3.2 9.7h7.8M3.2 11.7h7.8" stroke="#a6a6a6" stroke-width=".8"/></svg>
<div class="t" style="left:36.80px;top:83.20px;font-size:15px;color:#3c3c3c;transform:scaleX(1.0018);">CityMatrix – An Urban Decision Support System Augmented by Artificia…</div>
<div class="t" style="left:534.30px;top:83.20px;font-size:15px;color:#3c3c3c;transform:scaleX(0.9241);">Zhang</div>
<svg class="ic" style="left:869px;top:86px" width="8" height="8" viewBox="0 0 8 8"><circle cx="4" cy="4" r="2.7" fill="#9fd3f5" stroke="#2d9ee8" stroke-width="1.2"/></svg>
<svg class="ic" style="left:6px;top:105px" width="7" height="10" viewBox="0 0 7 10"><path d="M.3 .5l5.4 4.5-5.4 4.5z" fill="#383838"/></svg>
<svg class="ic" style="left:17px;top:102px" width="16" height="17" viewBox="0 0 16 17"><path d="M1.2 .7h9.3l3 3v11.3H1.2z" fill="#fff" stroke="#c2c2c2" stroke-width="1.3" stroke-linejoin="round"/><path d="M3.2 3.7h5.5M3.2 5.7h7.8M3.2 7.7h7.8M3.2 9.7h7.8M3.2 11.7h7.8" stroke="#a6a6a6" stroke-width=".8"/></svg>
<div class="t" style="left:36.80px;top:103.20px;font-size:15px;color:#3c3c3c;transform:scaleX(0.9782);">Uncertainty-wise Cyber-Physical Systems Testing</div>
<div class="t" style="left:534.30px;top:103.20px;font-size:15px;color:#3c3c3c;transform:scaleX(0.9241);">Zhang</div>
<svg class="ic" style="left:869px;top:106px" width="8" height="8" viewBox="0 0 8 8"><circle cx="4" cy="4" r="2.7" fill="#9fd3f5" stroke="#2d9ee8" stroke-width="1.2"/></svg>
<svg class="ic" style="left:6px;top:125px" width="7" height="10" viewBox="0 0 7 10"><path d="M.3 .5l5.4 4.5-5.4 4.5z" fill="#383838"/></svg>
<svg class="ic" style="left:17px;top:122px" width="16" height="17" viewBox="0 0 16 17"><path d="M1.2 .7h9.3l3 3v11.3H1.2z" fill="#fff" stroke="#c2c2c2" stroke-width="1.3" stroke-linejoin="round"/><path d="M3.2 3.7h5.5M3.2 5.7h7.8M3.2 7.7h7.8M3.2 9.7h7.8M3.2 11.7h7.8" stroke="#a6a6a6" stroke-width=".8"/></svg>
<div class="t" style="left:36.80px;top:123.20px;font-size:15px;color:#3c3c3c;transform:scaleX(0.9751);">Graph-Theoretic Scagnostics</div>
<div class="t" style="left:534.30px;top:123.20px;font-size:15px;color:#3c3c3c;transform:scaleX(1.0013);">Wilkinson et al.</div>
<svg class="ic" style="left:869px;top:126px" width="8" height="8" viewBox="0 0 8 8"><circle cx="4" cy="4" r="2.7" fill="#9fd3f5" stroke="#2d9ee8" stroke-width="1.2"/></svg>
<svg class="ic" style="left:6px;top:145px" width="7" height="10" viewBox="0 0 7 10"><path d="M.3 .5l5.4 4.5-5.4 4.5z" fill="#383838"/></svg>
<svg class="ic" style="left:17px;top:142px" width="16" height="17" viewBox="0 0 16 17"><path d="M1.2 .7h9.3l3 3v11.3H1.2z" fill="#fff" stroke="#c2c2c2" stroke-width="1.3" stroke-linejoin="round"/><path d="M3.2 3.7h5.5M3.2 5.7h7.8M3.2 7.7h7.8M3.2 9.7h7.8M3.2 11.7h7.8" stroke="#a6a6a6" stroke-width=".8"/></svg>
<div class="t" style="left:36.80px;top:143.20px;font-size:15px;color:#3c3c3c;transform:scaleX(0.9961);">Formalizing Visualization Design Knowledge as Constraints: Actionable …</div>
<div class="t" style="left:534.30px;top:143.20px;font-size:15px;color:#3c3c3c;transform:scaleX(1.0334);">Moritz et al.</div>
<svg class="ic" style="left:869px;top:146px" width="8" height="8" viewBox="0 0 8 8"><circle cx="4" cy="4" r="2.7" fill="#9fd3f5" stroke="#2d9ee8" stroke-width="1.2"/></svg>
<svg class="ic" style="left:6px;top:165px" width="7" height="10" viewBox="0 0 7 10"><path d="M.3 .5l5.4 4.5-5.4 4.5z" fill="#383838"/></svg>
<svg class="ic" style="left:17px;top:162px" width="16" height="17" viewBox="0 0 16 17"><path d="M1.2 .7h9.3l3 3v11.3H1.2z" fill="#fff" stroke="#c2c2c2" stroke-width="1.3" stroke-linejoin="round"/><path d="M3.2 3.7h5.5M3.2 5.7h7.8M3.2 7.7h7.8M3.2 9.7h7.8M3.2 11.7h7.8" stroke="#a6a6a6" stroke-width=".8"/></svg>
<div class="t" style="left:36.80px;top:163.20px;font-size:15px;color:#3c3c3c;transform:scaleX(0.9791);">Some Research Problems in Uncertainty Theory</div>
<div class="t" style="left:534.30px;top:163.20px;font-size:15px;color:#3c3c3c;transform:scaleX(0.9642);">Liu</div>
<svg class="ic" style="left:869px;top:166px" width="8" height="8" viewBox="0 0 8 8"><circle cx="4" cy="4" r="2.7" fill="#9fd3f5" stroke="#2d9ee8" stroke-width="1.2"/></svg>
<svg class="ic" style="left:6px;top:185px" width="7" height="10" viewBox="0 0 7 10"><path d="M.3 .5l5.4 4.5-5.4 4.5z" fill="#383838"/></svg>
<svg class="ic" style="left:17px;top:182px" width="16" height="17" viewBox="0 0 16 17"><path d="M1.2 .7h9.3l3 3v11.3H1.2z" fill="#fff" stroke="#c2c2c2" stroke-width="1.3" stroke-linejoin="round"/><path d="M3.2 3.7h5.5M3.2 5.7h7.8M3.2 7.7h7.8M3.2 9.7h7.8M3.2 11.7h7.8" stroke="#a6a6a6" stroke-width=".8"/></svg>
<div class="t" style="left:36.80px;top:183.20px;font-size:15px;color:#3c3c3c;transform:scaleX(1.0404);">Network Visualization</div>
<div class="t" style="left:534.30px;top:183.20px;font-size:15px;color:#3c3c3c;transform:scaleX(1.0116);">Krempel</div>
<svg class="ic" style="left:869px;top:186px" width="8" height="8" viewBox="0 0 8 8"><circle cx="4" cy="4" r="2.7" fill="#9fd3f5" stroke="#2d9ee8" stroke-width="1.2"/></svg>
<svg class="ic" style="left:6px;top:205px" width="7" height="10" viewBox="0 0 7 10"><path d="M.3 .5l5.4 4.5-5.4 4.5z" fill="#383838"/></svg>
<svg class="ic" style="left:17px;top:202px" width="16" height="17" viewBox="0 0 16 17"><path d="M1.2 .7h9.3l3 3v11.3H1.2z" fill="#fff" stroke="#c2c2c2" stroke-width="1.3" stroke-linejoin="round"/><path d="M3.2 3.7h5.5M3.2 5.7h7.8M3.2 7.7h7.8M3.2 9.7h7.8M3.2 11.7h7.8" stroke="#a6a6a6" stroke-width=".8"/></svg>
<div class="t" style="left:36.80px;top:203.20px;font-size:15px;color:#3c3c3c;transform:scaleX(0.9820);">BiDaML: A Suite of Visual Languages for Supporting End-user Data Anal…</div>
<div class="t" style="left:534.30px;top:203.20px;font-size:15px;color:#3c3c3c;transform:scaleX(0.9703);">Khalajzadeh et al.</div>
<svg class="ic" style="left:869px;top:206px" width="8" height="8" viewBox="0 0 8 8"><circle cx="4" cy="4" r="2.7" fill="#9fd3f5" stroke="#2d9ee8" stroke-width="1.2"/></svg>
<svg class="ic" style="left:6px;top:225px" width="7" height="10" viewBox="0 0 7 10"><path d="M.3 .5l5.4 4.5-5.4 4.5z" fill="#383838"/></svg>
<svg class="ic" style="left:17px;top:222px" width="16" height="17" viewBox="0 0 16 17"><path d="M1.2 .7h9.3l3 3v11.3H1.2z" fill="#fff" stroke="#c2c2c2" stroke-width="1.3" stroke-linejoin="round"/><path d="M3.2 3.7h5.5M3.2 5.7h7.8M3.2 7.7h7.8M3.2 9.7h7.8M3.2 11.7h7.8" stroke="#a6a6a6" stroke-width=".8"/></svg>
<div class="t" style="left:36.80px;top:223.20px;font-size:15px;color:#3c3c3c;transform:scaleX(1.0080);">Dynamic cost-effective social network data placement and replication i…</div>
<div class="t" style="left:534.30px;top:223.20px;font-size:15px;color:#3c3c3c;transform:scaleX(0.9738);">Khalajzadeh</div>
<svg class="ic" style="left:869px;top:226px" width="8" height="8" viewBox="0 0 8 8"><circle cx="4" cy="4" r="2.7" fill="#9fd3f5" stroke="#2d9ee8" stroke-width="1.2"/></svg>
<svg class="ic" style="left:6px;top:245px" width="7" height="10" viewBox="0 0 7 10"><path d="M.3 .5l5.4 4.5-5.4 4.5z" fill="#383838"/></svg>
<svg class="ic" style="left:17px;top:242px" width="16" height="17" viewBox="0 0 16 17"><path d="M1.2 .7h9.3l3 3v11.3H1.2z" fill="#fff" stroke="#c2c2c2" stroke-width="1.3" stroke-linejoin="round"/><path d="M3.2 3.7h5.5M3.2 5.7h7.8M3.2 7.7h7.8M3.2 9.7h7.8M3.2 11.7h7.8" stroke="#a6a6a6" stroke-width=".8"/></svg>
<div class="t" style="left:36.80px;top:243.20px;font-size:15px;color:#3c3c3c;transform:scaleX(1.0069);">Petascale Cloud Supercomputing for Terapixel Visualization of a Digital…</div>
<div class="t" style="left:534.30px;top:243.20px;font-size:15px;color:#3c3c3c;transform:scaleX(0.9986);">Holliman et al.</div>
<svg class="ic" style="left:869px;top:246px" width="8" height="8" viewBox="0 0 8 8"><circle cx="4" cy="4" r="2.7" fill="#9fd3f5" stroke="#2d9ee8" stroke-width="1.2"/></svg>
<svg class="ic" style="left:6px;top:265px" width="7" height="10" viewBox="0 0 7 10"><path d="M.3 .5l5.4 4.5-5.4 4.5z" fill="#383838"/></svg>
<svg class="ic" style="left:17px;top:262px" width="16" height="17" viewBox="0 0 16 17"><path d="M1.2 .7h9.3l3 3v11.3H1.2z" fill="#fff" stroke="#c2c2c2" stroke-width="1.3" stroke-linejoin="round"/><path d="M3.2 3.7h5.5M3.2 5.7h7.8M3.2 7.7h7.8M3.2 9.7h7.8M3.2 11.7h7.8" stroke="#a6a6a6" stroke-width=".8"/></svg>
<div class="t" style="left:36.80px;top:263.20px;font-size:15px;color:#3c3c3c;transform:scaleX(1.0122);">Ontology-based Intelligent Transportation Systems</div>
<div class="t" style="left:534.30px;top:263.20px;font-size:15px;color:#3c3c3c;transform:scaleX(0.9815);">Gyrard et al.</div>
<svg class="ic" style="left:869px;top:266px" width="8" height="8" viewBox="0 0 8 8"><circle cx="4" cy="4" r="2.7" fill="#9fd3f5" stroke="#2d9ee8" stroke-width="1.2"/></svg>
<svg class="ic" style="left:6px;top:285px" width="7" height="10" viewBox="0 0 7 10"><path d="M.3 .5l5.4 4.5-5.4 4.5z" fill="#383838"/></svg>
<svg class="ic" style="left:17px;top:282px" width="16" height="17" viewBox="0 0 16 17"><path d="M1.2 .7h9.3l3 3v11.3H1.2z" fill="#fff" stroke="#c2c2c2" stroke-width="1.3" stroke-linejoin="round"/><path d="M3.2 3.7h5.5M3.2 5.7h7.8M3.2 7.7h7.8M3.2 9.7h7.8M3.2 11.7h7.8" stroke="#a6a6a6" stroke-width=".8"/></svg>
<div class="t" style="left:36.80px;top:283.20px;font-size:15px;color:#3c3c3c;transform:scaleX(0.9995);">A Real-Time Visualization Tool Applied Both to Data and Simulation Out…</div>
<div class="t" style="left:534.30px;top:283.20px;font-size:15px;color:#3c3c3c;transform:scaleX(0.9795);">Grignard and Dro…</div>
<svg class="ic" style="left:869px;top:286px" width="8" height="8" viewBox="0 0 8 8"><circle cx="4" cy="4" r="2.7" fill="#9fd3f5" stroke="#2d9ee8" stroke-width="1.2"/></svg>
<svg class="ic" style="left:6px;top:305px" width="7" height="10" viewBox="0 0 7 10"><path d="M.3 .5l5.4 4.5-5.4 4.5z" fill="#383838"/></svg>
<svg class="ic" style="left:17px;top:302px" width="16" height="17" viewBox="0 0 16 17"><path d="M1.2 .7h9.3l3 3v11.3H1.2z" fill="#fff" stroke="#c2c2c2" stroke-width="1.3" stroke-linejoin="round"/><path d="M3.2 3.7h5.5M3.2 5.7h7.8M3.2 7.7h7.8M3.2 9.7h7.8M3.2 11.7h7.8" stroke="#a6a6a6" stroke-width=".8"/></svg>
<div class="t" style="left:36.80px;top:303.20px;font-size:15px;color:#3c3c3c;transform:scaleX(0.9749);">Cloud Based Large-Scale Real-Time Simulation for Traffic Engineering</div>
<div class="t" style="left:534.30px;top:303.20px;font-size:15px;color:#3c3c3c;transform:scaleX(0.9772);">Giardina</div>
<svg class="ic" style="left:869px;top:306px" width="8" height="8" viewBox="0 0 8 8"><circle cx="4" cy="4" r="2.7" fill="#9fd3f5" stroke="#2d9ee8" stroke-width="1.2"/></svg>
<svg class="ic" style="left:6px;top:325px" width="7" height="10" viewBox="0 0 7 10"><path d="M.3 .5l5.4 4.5-5.4 4.5z" fill="#383838"/></svg>
<svg class="ic" style="left:17px;top:322px" width="16" height="17" viewBox="0 0 16 17"><path d="M1.2 .7h9.3l3 3v11.3H1.2z" fill="#fff" stroke="#c2c2c2" stroke-width="1.3" stroke-linejoin="round"/><path d="M3.2 3.7h5.5M3.2 5.7h7.8M3.2 7.7h7.8M3.2 9.7h7.8M3.2 11.7h7.8" stroke="#a6a6a6" stroke-width=".8"/></svg>
<div class="t" style="left:36.80px;top:323.20px;font-size:15px;color:#3c3c3c;transform:scaleX(0.9972);">Towards a Visualisation Process for Ontology-Based Conceptual Model…</div>
<div class="t" style="left:534.30px;top:323.20px;font-size:15px;color:#3c3c3c;transform:scaleX(0.9582);">Braun et al.</div>
<svg class="ic" style="left:869px;top:326px" width="8" height="8" viewBox="0 0 8 8"><circle cx="4" cy="4" r="2.7" fill="#9fd3f5" stroke="#2d9ee8" stroke-width="1.2"/></svg>
<svg class="ic" style="left:6px;top:345px" width="7" height="10" viewBox="0 0 7 10"><path d="M.3 .5l5.4 4.5-5.4 4.5z" fill="#383838"/></svg>
<svg class="ic" style="left:17px;top:342px" width="16" height="17" viewBox="0 0 16 17"><path d="M1.2 .7h9.3l3 3v11.3H1.2z" fill="#fff" stroke="#c2c2c2" stroke-width="1.3" stroke-linejoin="round"/><path d="M3.2 3.7h5.5M3.2 5.7h7.8M3.2 7.7h7.8M3.2 9.7h7.8M3.2 11.7h7.8" stroke="#a6a6a6" stroke-width=".8"/></svg>
<div class="t" style="left:36.80px;top:343.20px;font-size:15px;color:#3c3c3c;transform:scaleX(0.9964);">Automatic vs Manual Provenance Abstractions: Mind the Gap</div>
<div class="t" style="left:534.30px;top:343.20px;font-size:15px;color:#3c3c3c;transform:scaleX(0.9972);">Alper et al.</div>
<svg class="ic" style="left:869px;top:346px" width="8" height="8" viewBox="0 0 8 8"><circle cx="4" cy="4" r="2.7" fill="#9fd3f5" stroke="#2d9ee8" stroke-width="1.2"/></svg>
<svg class="ic" style="left:6px;top:365px" width="7" height="10" viewBox="0 0 7 10"><path d="M.3 .5l5.4 4.5-5.4 4.5z" fill="#383838"/></svg>
<svg class="ic" style="left:17px;top:362px" width="16" height="17" viewBox="0 0 16 17"><path d="M1.2 .7h9.3l3 3v11.3H1.2z" fill="#fff" stroke="#c2c2c2" stroke-width="1.3" stroke-linejoin="round"/><path d="M3.2 3.7h5.5M3.2 5.7h7.8M3.2 7.7h7.8M3.2 9.7h7.8M3.2 11.7h7.8" stroke="#a6a6a6" stroke-width=".8"/></svg>
<div class="t" style="left:36.80px;top:363.20px;font-size:15px;color:#3c3c3c;transform:scaleX(1.0029);">Visual Abstraction of Large Scale Geospatial Origin-Destination Movem…</div>
<div class="t" style="left:534.30px;top:363.20px;font-size:15px;color:#3c3c3c;transform:scaleX(0.9553);">Zhou et al.</div>
<div class="t" style="left:674.50px;top:363.20px;font-size:15px;color:#3c3c3c;transform:scaleX(0.9261);">2019</div>
<svg class="ic" style="left:869px;top:366px" width="8" height="8" viewBox="0 0 8 8"><circle cx="4" cy="4" r="2.7" fill="#9fd3f5" stroke="#2d9ee8" stroke-width="1.2"/></svg>
<svg class="ic" style="left:6px;top:385px" width="7" height="10" viewBox="0 0 7 10"><path d="M.3 .5l5.4 4.5-5.4 4.5z" fill="#383838"/></svg>
<svg class="ic" style="left:17px;top:382px" width="16" height="17" viewBox="0 0 16 17"><path d="M1.2 .7h9.3l3 3v11.3H1.2z" fill="#fff" stroke="#c2c2c2" stroke-width="1.3" stroke-linejoin="round"/><path d="M3.2 3.7h5.5M3.2 5.7h7.8M3.2 7.7h7.8M3.2 9.7h7.8M3.2 11.7h7.8" stroke="#a6a6a6" stroke-width=".8"/></svg>
<div class="t" style="left:36.80px;top:383.20px;font-size:15px;color:#3c3c3c;transform:scaleX(1.0008);">ViewSeeker: An Interactive View Recommendation Tool</div>
<div class="t" style="left:534.30px;top:383.20px;font-size:15px;color:#3c3c3c;transform:scaleX(0.9456);">Zhang et al.</div>
<div class="t" style="left:674.50px;top:383.20px;font-size:15px;color:#3c3c3c;transform:scaleX(0.9261);">2019</div>
<svg class="ic" style="left:869px;top:386px" width="8" height="8" viewBox="0 0 8 8"><circle cx="4" cy="4" r="2.7" fill="#9fd3f5" stroke="#2d9ee8" stroke-width="1.2"/></svg>
<svg class="ic" style="left:6px;top:405px" width="7" height="10" viewBox="0 0 7 10"><path d="M.3 .5l5.4 4.5-5.4 4.5z" fill="#383838"/></svg>
<svg class="ic" style="left:17px;top:402px" width="16" height="17" viewBox="0 0 16 17"><path d="M1.2 .7h9.3l3 3v11.3H1.2z" fill="#fff" stroke="#c2c2c2" stroke-width="1.3" stroke-linejoin="round"/><path d="M3.2 3.7h5.5M3.2 5.7h7.8M3.2 7.7h7.8M3.2 9.7h7.8M3.2 11.7h7.8" stroke="#a6a6a6" stroke-width=".8"/></svg>
<div class="t" style="left:36.80px;top:403.20px;font-size:15px;color:#3c3c3c;transform:scaleX(0.9873);">Mining Precision Interfaces From Query Logs</div>
<div class="t" style="left:534.30px;top:403.20px;font-size:15px;color:#3c3c3c;transform:scaleX(0.9456);">Zhang et al.</div>
<div class="t" style="left:674.50px;top:403.20px;font-size:15px;color:#3c3c3c;transform:scaleX(0.9261);">2019</div>
<svg class="ic" style="left:869px;top:406px" width="8" height="8" viewBox="0 0 8 8"><circle cx="4" cy="4" r="2.7" fill="#9fd3f5" stroke="#2d9ee8" stroke-width="1.2"/></svg>
<svg class="ic" style="left:6px;top:425px" width="7" height="10" viewBox="0 0 7 10"><path d="M.3 .5l5.4 4.5-5.4 4.5z" fill="#383838"/></svg>
<svg class="ic" style="left:17px;top:422px" width="16" height="17" viewBox="0 0 16 17"><path d="M1.2 .7h9.3l3 3v11.3H1.2z" fill="#fff" stroke="#c2c2c2" stroke-width="1.3" stroke-linejoin="round"/><path d="M3.2 3.7h5.5M3.2 5.7h7.8M3.2 7.7h7.8M3.2 9.7h7.8M3.2 11.7h7.8" stroke="#a6a6a6" stroke-width=".8"/></svg>
<div class="t" style="left:36.80px;top:423.20px;font-size:15px;color:#3c3c3c;transform:scaleX(0.9928);">Driver Back-Tracing Based on Automated Vehicle Identification Data</div>
<div class="t" style="left:534.30px;top:423.20px;font-size:15px;color:#3c3c3c;transform:scaleX(0.9550);">Yuan et al.</div>
<div class="t" style="left:674.50px;top:423.20px;font-size:15px;color:#3c3c3c;transform:scaleX(0.9261);">2019</div>
<svg class="ic" style="left:869px;top:426px" width="8" height="8" viewBox="0 0 8 8"><circle cx="4" cy="4" r="2.7" fill="#9fd3f5" stroke="#2d9ee8" stroke-width="1.2"/></svg>
<svg class="ic" style="left:6px;top:445px" width="7" height="10" viewBox="0 0 7 10"><path d="M.3 .5l5.4 4.5-5.4 4.5z" fill="#383838"/></svg>
<svg class="ic" style="left:17px;top:442px" width="16" height="17" viewBox="0 0 16 17"><path d="M1.2 .7h9.3l3 3v11.3H1.2z" fill="#fff" stroke="#c2c2c2" stroke-width="1.3" stroke-linejoin="round"/><path d="M3.2 3.7h5.5M3.2 5.7h7.8M3.2 7.7h7.8M3.2 9.7h7.8M3.2 11.7h7.8" stroke="#a6a6a6" stroke-width=".8"/></svg>
<div class="t" style="left:36.80px;top:443.20px;font-size:15px;color:#3c3c3c;transform:scaleX(0.9954);">Origin-Destination Flow Maps in Immersive Environments</div>
<div class="t" style="left:534.30px;top:443.20px;font-size:15px;color:#3c3c3c;transform:scaleX(0.9504);">Yang et al.</div>
<div class="t" style="left:674.50px;top:443.20px;font-size:15px;color:#3c3c3c;transform:scaleX(0.9261);">2019</div>
<svg class="ic" style="left:869px;top:446px" width="8" height="8" viewBox="0 0 8 8"><circle cx="4" cy="4" r="2.7" fill="#9fd3f5" stroke="#2d9ee8" stroke-width="1.2"/></svg>
<svg class="ic" style="left:6px;top:465px" width="7" height="10" viewBox="0 0 7 10"><path d="M.3 .5l5.4 4.5-5.4 4.5z" fill="#383838"/></svg>
<svg class="ic" style="left:17px;top:462px" width="16" height="17" viewBox="0 0 16 17"><path d="M1.2 .7h9.3l3 3v11.3H1.2z" fill="#fff" stroke="#c2c2c2" stroke-width="1.3" stroke-linejoin="round"/><path d="M3.2 3.7h5.5M3.2 5.7h7.8M3.2 7.7h7.8M3.2 9.7h7.8M3.2 11.7h7.8" stroke="#a6a6a6" stroke-width=".8"/></svg>
<div class="t" style="left:36.80px;top:463.20px;font-size:15px;color:#3c3c3c;transform:scaleX(0.9959);">ForVizor: Visualizing Spatio-Temporal Team Formations in Soccer</div>
<div class="t" style="left:534.30px;top:463.20px;font-size:15px;color:#3c3c3c;transform:scaleX(0.9743);">Wu et al.</div>
<div class="t" style="left:674.50px;top:463.20px;font-size:15px;color:#3c3c3c;transform:scaleX(0.9261);">2019</div>
<svg class="ic" style="left:869px;top:466px" width="8" height="8" viewBox="0 0 8 8"><circle cx="4" cy="4" r="2.7" fill="#9fd3f5" stroke="#2d9ee8" stroke-width="1.2"/></svg>
<svg class="ic" style="left:6px;top:485px" width="7" height="10" viewBox="0 0 7 10"><path d="M.3 .5l5.4 4.5-5.4 4.5z" fill="#383838"/></svg>
<svg class="ic" style="left:17px;top:482px" width="16" height="17" viewBox="0 0 16 17"><path d="M1.2 .7h9.3l3 3v11.3H1.2z" fill="#fff" stroke="#c2c2c2" stroke-width="1.3" stroke-linejoin="round"/><path d="M3.2 3.7h5.5M3.2 5.7h7.8M3.2 7.7h7.8M3.2 9.7h7.8M3.2 11.7h7.8" stroke="#a6a6a6" stroke-width=".8"/></svg>
<div class="t" style="left:36.80px;top:483.20px;font-size:15px;color:#3c3c3c;transform:scaleX(1.0059);">Optimizing Color Assignment for Perception of Class Separability in Mu…</div>
<div class="t" style="left:534.30px;top:483.20px;font-size:15px;color:#3c3c3c;transform:scaleX(0.9720);">Wang et al.</div>
<div class="t" style="left:674.50px;top:483.20px;font-size:15px;color:#3c3c3c;transform:scaleX(0.9261);">2019</div>
<svg class="ic" style="left:869px;top:486px" width="8" height="8" viewBox="0 0 8 8"><circle cx="4" cy="4" r="2.7" fill="#9fd3f5" stroke="#2d9ee8" stroke-width="1.2"/></svg>
<svg class="ic" style="left:6px;top:505px" width="7" height="10" viewBox="0 0 7 10"><path d="M.3 .5l5.4 4.5-5.4 4.5z" fill="#383838"/></svg>
<svg class="ic" style="left:17px;top:502px" width="16" height="17" viewBox="0 0 16 17"><path d="M1.2 .7h9.3l3 3v11.3H1.2z" fill="#fff" stroke="#c2c2c2" stroke-width="1.3" stroke-linejoin="round"/><path d="M3.2 3.7h5.5M3.2 5.7h7.8M3.2 7.7h7.8M3.2 9.7h7.8M3.2 11.7h7.8" stroke="#a6a6a6" stroke-width=".8"/></svg>
<div class="t" style="left:36.80px;top:503.20px;font-size:15px;color:#3c3c3c;transform:scaleX(0.9838);">Lessons learned from developing mbeddr: a case study in language engi…</div>
<div class="t" style="left:534.30px;top:503.20px;font-size:15px;color:#3c3c3c;transform:scaleX(1.0206);">Voelter et al.</div>
<div class="t" style="left:674.50px;top:503.20px;font-size:15px;color:#3c3c3c;transform:scaleX(0.9261);">2019</div>
<svg class="ic" style="left:869px;top:506px" width="8" height="8" viewBox="0 0 8 8"><circle cx="4" cy="4" r="2.7" fill="#9fd3f5" stroke="#2d9ee8" stroke-width="1.2"/></svg>
<svg class="ic" style="left:6px;top:525px" width="7" height="10" viewBox="0 0 7 10"><path d="M.3 .5l5.4 4.5-5.4 4.5z" fill="#383838"/></svg>
<svg class="ic" style="left:17px;top:522px" width="16" height="17" viewBox="0 0 16 17"><path d="M1.2 .7h9.3l3 3v11.3H1.2z" fill="#fff" stroke="#c2c2c2" stroke-width="1.3" stroke-linejoin="round"/><path d="M3.2 3.7h5.5M3.2 5.7h7.8M3.2 7.7h7.8M3.2 9.7h7.8M3.2 11.7h7.8" stroke="#a6a6a6" stroke-width=".8"/></svg>
<div class="t" style="left:36.80px;top:523.20px;font-size:15px;color:#3c3c3c;transform:scaleX(1.0079);">Beyond roll-up’s and drill-down’s: An intentional analytics model to rein…</div>
<div class="t" style="left:534.30px;top:523.20px;font-size:15px;color:#3c3c3c;transform:scaleX(1.0006);">Vassiliadis et al.</div>
<div class="t" style="left:674.50px;top:523.20px;font-size:15px;color:#3c3c3c;transform:scaleX(0.9261);">2019</div>
<svg class="ic" style="left:869px;top:526px" width="8" height="8" viewBox="0 0 8 8"><circle cx="4" cy="4" r="2.7" fill="#9fd3f5" stroke="#2d9ee8" stroke-width="1.2"/></svg>
<svg class="ic" style="left:6px;top:545px" width="7" height="10" viewBox="0 0 7 10"><path d="M.3 .5l5.4 4.5-5.4 4.5z" fill="#383838"/></svg>
<svg class="ic" style="left:17px;top:542px" width="16" height="17" viewBox="0 0 16 17"><path d="M1.2 .7h9.3l3 3v11.3H1.2z" fill="#fff" stroke="#c2c2c2" stroke-width="1.3" stroke-linejoin="round"/><path d="M3.2 3.7h5.5M3.2 5.7h7.8M3.2 7.7h7.8M3.2 9.7h7.8M3.2 11.7h7.8" stroke="#a6a6a6" stroke-width=".8"/></svg>
<div class="t" style="left:36.80px;top:543.20px;font-size:15px;color:#3c3c3c;transform:scaleX(1.0071);">Towards Democratizing Relational Data Visualization</div>
<div class="t" style="left:534.30px;top:543.20px;font-size:15px;color:#3c3c3c;transform:scaleX(0.9580);">Tang et al.</div>
<div class="t" style="left:674.50px;top:543.20px;font-size:15px;color:#3c3c3c;transform:scaleX(0.9261);">2019</div>
<svg class="ic" style="left:869px;top:546px" width="8" height="8" viewBox="0 0 8 8"><circle cx="4" cy="4" r="2.7" fill="#9fd3f5" stroke="#2d9ee8" stroke-width="1.2"/></svg>
<svg class="ic" style="left:6px;top:565px" width="7" height="10" viewBox="0 0 7 10"><path d="M.3 .5l5.4 4.5-5.4 4.5z" fill="#383838"/></svg>
<svg class="ic" style="left:17px;top:562px" width="16" height="17" viewBox="0 0 16 17"><path d="M1.2 .7h9.3l3 3v11.3H1.2z" fill="#fff" stroke="#c2c2c2" stroke-width="1.3" stroke-linejoin="round"/><path d="M3.2 3.7h5.5M3.2 5.7h7.8M3.2 7.7h7.8M3.2 9.7h7.8M3.2 11.7h7.8" stroke="#a6a6a6" stroke-width=".8"/></svg>
<div class="t" style="left:36.80px;top:563.20px;font-size:15px;color:#3c3c3c;transform:scaleX(0.9854);">KnowledgePearls: Provenance-Based Visualization Retrieval</div>
<div class="t" style="left:534.30px;top:563.20px;font-size:15px;color:#3c3c3c;transform:scaleX(1.0067);">Stitz et al.</div>
<div class="t" style="left:674.50px;top:563.20px;font-size:15px;color:#3c3c3c;transform:scaleX(0.9261);">2019</div>
<svg class="ic" style="left:869px;top:566px" width="8" height="8" viewBox="0 0 8 8"><circle cx="4" cy="4" r="2.7" fill="#9fd3f5" stroke="#2d9ee8" stroke-width="1.2"/></svg>
<svg class="ic" style="left:6px;top:585px" width="7" height="10" viewBox="0 0 7 10"><path d="M.3 .5l5.4 4.5-5.4 4.5z" fill="#383838"/></svg>
<svg class="ic" style="left:17px;top:582px" width="16" height="17" viewBox="0 0 16 17"><path d="M1.2 .7h9.3l3 3v11.3H1.2z" fill="#fff" stroke="#c2c2c2" stroke-width="1.3" stroke-linejoin="round"/><path d="M3.2 3.7h5.5M3.2 5.7h7.8M3.2 7.7h7.8M3.2 9.7h7.8M3.2 11.7h7.8" stroke="#a6a6a6" stroke-width=".8"/></svg>
<div class="t" style="left:36.80px;top:583.20px;font-size:15px;color:#3c3c3c;transform:scaleX(0.9850);">Where&#x27;s My Data? Evaluating Visualizations with Missing Data</div>
<div class="t" style="left:534.30px;top:583.20px;font-size:15px;color:#3c3c3c;transform:scaleX(0.9463);">Song and Szafir</div>
<div class="t" style="left:674.50px;top:583.20px;font-size:15px;color:#3c3c3c;transform:scaleX(0.9261);">2019</div>
<svg class="ic" style="left:869px;top:586px" width="8" height="8" viewBox="0 0 8 8"><circle cx="4" cy="4" r="2.7" fill="#9fd3f5" stroke="#2d9ee8" stroke-width="1.2"/></svg>
<svg class="ic" style="left:6px;top:605px" width="7" height="10" viewBox="0 0 7 10"><path d="M.3 .5l5.4 4.5-5.4 4.5z" fill="#383838"/></svg>
<svg class="ic" style="left:17px;top:602px" width="16" height="17" viewBox="0 0 16 17"><path d="M1.2 .7h9.3l3 3v11.3H1.2z" fill="#fff" stroke="#c2c2c2" stroke-width="1.3" stroke-linejoin="round"/><path d="M3.2 3.7h5.5M3.2 5.7h7.8M3.2 7.7h7.8M3.2 9.7h7.8M3.2 11.7h7.8" stroke="#a6a6a6" stroke-width=".8"/></svg>
<div class="t" style="left:36.80px;top:603.20px;font-size:15px;color:#3c3c3c;transform:scaleX(1.0033);">DXR: A Toolkit for Building Immersive Data Visualizations</div>
<div class="t" style="left:534.30px;top:603.20px;font-size:15px;color:#3c3c3c;transform:scaleX(0.9667);">Sicat et al.</div>
<div class="t" style="left:674.50px;top:603.20px;font-size:15px;color:#3c3c3c;transform:scaleX(0.9261);">2019</div>
<svg class="ic" style="left:869px;top:606px" width="8" height="8" viewBox="0 0 8 8"><circle cx="4" cy="4" r="2.7" fill="#9fd3f5" stroke="#2d9ee8" stroke-width="1.2"/></svg>
<svg class="ic" style="left:6px;top:625px" width="7" height="10" viewBox="0 0 7 10"><path d="M.3 .5l5.4 4.5-5.4 4.5z" fill="#383838"/></svg>
<svg class="ic" style="left:17px;top:622px" width="16" height="17" viewBox="0 0 16 17"><path d="M1.2 .7h9.3l3 3v11.3H1.2z" fill="#fff" stroke="#c2c2c2" stroke-width="1.3" stroke-linejoin="round"/><path d="M3.2 3.7h4M3.2 5.7h4" stroke="#bbb" stroke-width=".8"/><circle cx="9.3" cy="4.9" r="2.3" fill="#f6d7a8" stroke="#e6ae2a" stroke-width="1"/><path d="M6.5 11.5c0-2.5 1.2-3.8 2.8-3.8s2.8 1.3 2.8 3.8z" fill="#6cc24a"/><circle cx="5.3" cy="8.2" r="2.2" fill="#f6d2ae" stroke="#b57a4a" stroke-width=".9"/><path d="M1.5 15c0-3 1.6-4.3 3.8-4.3s3.8 1.3 3.8 4.3z" fill="#4a9be8"/></svg>
<div class="t" style="left:36.80px;top:623.20px;font-size:15px;color:#3c3c3c;transform:scaleX(0.9960);">Democratizing Data Science through Interactive Curation of ML Pipelines</div>
<div class="t" style="left:534.30px;top:623.20px;font-size:15px;color:#3c3c3c;transform:scaleX(0.9356);">Shang et al.</div>
<div class="t" style="left:674.50px;top:623.20px;font-size:15px;color:#3c3c3c;transform:scaleX(0.9261);">2019</div>
<svg class="ic" style="left:869px;top:626px" width="8" height="8" viewBox="0 0 8 8"><circle cx="4" cy="4" r="2.7" fill="#9fd3f5" stroke="#2d9ee8" stroke-width="1.2"/></svg>
<svg class="ic" style="left:6px;top:645px" width="7" height="10" viewBox="0 0 7 10"><path d="M.3 .5l5.4 4.5-5.4 4.5z" fill="#383838"/></svg>
<svg class="ic" style="left:17px;top:642px" width="16" height="17" viewBox="0 0 16 17"><path d="M1.2 .7h9.3l3 3v11.3H1.2z" fill="#fff" stroke="#c2c2c2" stroke-width="1.3" stroke-linejoin="round"/><path d="M3.2 3.7h5.5M3.2 5.7h7.8M3.2 7.7h7.8M3.2 9.7h7.8M3.2 11.7h7.8" stroke="#a6a6a6" stroke-width=".8"/></svg>
<div class="t" style="left:36.80px;top:643.20px;font-size:15px;color:#3c3c3c;transform:scaleX(1.0007);">Mapping Color to Meaning in Colormap Data Visualizations</div>
<div class="t" style="left:534.30px;top:643.20px;font-size:15px;color:#3c3c3c;transform:scaleX(0.9540);">Schloss et al.</div>
<div class="t" style="left:674.50px;top:643.20px;font-size:15px;color:#3c3c3c;transform:scaleX(0.9261);">2019</div>
<svg class="ic" style="left:869px;top:646px" width="8" height="8" viewBox="0 0 8 8"><circle cx="4" cy="4" r="2.7" fill="#9fd3f5" stroke="#2d9ee8" stroke-width="1.2"/></svg>
<svg class="ic" style="left:6px;top:665px" width="7" height="10" viewBox="0 0 7 10"><path d="M.3 .5l5.4 4.5-5.4 4.5z" fill="#383838"/></svg>
<svg class="ic" style="left:17px;top:662px" width="16" height="17" viewBox="0 0 16 17"><path d="M1.2 .7h9.3l3 3v11.3H1.2z" fill="#fff" stroke="#c2c2c2" stroke-width="1.3" stroke-linejoin="round"/><path d="M3.2 3.7h5.5M3.2 5.7h7.8M3.2 7.7h7.8M3.2 9.7h7.8M3.2 11.7h7.8" stroke="#a6a6a6" stroke-width=".8"/></svg>
<div class="t" style="left:36.80px;top:663.20px;font-size:15px;color:#3c3c3c;transform:scaleX(0.9936);">VIS4ML: An Ontology for Visual Analytics Assisted Machine Learning</div>
<div class="t" style="left:534.30px;top:663.20px;font-size:15px;color:#3c3c3c;transform:scaleX(0.9342);">Sacha et al.</div>
<div class="t" style="left:674.50px;top:663.20px;font-size:15px;color:#3c3c3c;transform:scaleX(0.9261);">2019</div>
<svg class="ic" style="left:869px;top:666px" width="8" height="8" viewBox="0 0 8 8"><circle cx="4" cy="4" r="2.7" fill="#9fd3f5" stroke="#2d9ee8" stroke-width="1.2"/></svg>
<svg class="ic" style="left:6px;top:685px" width="7" height="10" viewBox="0 0 7 10"><path d="M.3 .5l5.4 4.5-5.4 4.5z" fill="#383838"/></svg>
<svg class="ic" style="left:17px;top:682px" width="16" height="17" viewBox="0 0 16 17"><path d="M1.2 .7h9.3l3 3v11.3H1.2z" fill="#fff" stroke="#c2c2c2" stroke-width="1.3" stroke-linejoin="round"/><path d="M3.2 3.7h5.5M3.2 5.7h7.8M3.2 7.7h7.8M3.2 9.7h7.8M3.2 11.7h7.8" stroke="#a6a6a6" stroke-width=".8"/></svg>
<div class="t" style="left:36.80px;top:683.20px;font-size:15px;color:#3c3c3c;transform:scaleX(0.9972);">GitHub2PROV: Provenance for Supporting Software Project Management</div>
<div class="t" style="left:534.30px;top:683.20px;font-size:15px;color:#3c3c3c;transform:scaleX(0.9668);">Packer et al.</div>
<div class="t" style="left:674.50px;top:683.20px;font-size:15px;color:#3c3c3c;transform:scaleX(0.9261);">2019</div>
<svg class="ic" style="left:869px;top:686px" width="8" height="8" viewBox="0 0 8 8"><circle cx="4" cy="4" r="2.7" fill="#9fd3f5" stroke="#2d9ee8" stroke-width="1.2"/></svg>
<svg class="ic" style="left:6px;top:705px" width="7" height="10" viewBox="0 0 7 10"><path d="M.3 .5l5.4 4.5-5.4 4.5z" fill="#383838"/></svg>
<svg class="ic" style="left:17px;top:702px" width="16" height="17" viewBox="0 0 16 17"><path d="M1.2 .7h9.3l3 3v11.3H1.2z" fill="#fff" stroke="#c2c2c2" stroke-width="1.3" stroke-linejoin="round"/><path d="M3.2 3.7h5.5M3.2 5.7h7.8M3.2 7.7h7.8M3.2 9.7h7.8M3.2 11.7h7.8" stroke="#a6a6a6" stroke-width=".8"/></svg>
<div class="t" style="left:36.80px;top:703.20px;font-size:15px;color:#3c3c3c;transform:scaleX(0.9838);">Inferring User Intent using Bayesian Theory of Mind in Shared Avatar-Ag…</div>
<div class="t" style="left:534.30px;top:703.20px;font-size:15px;color:#3c3c3c;transform:scaleX(0.9758);">Narang et al.</div>
<div class="t" style="left:674.50px;top:703.20px;font-size:15px;color:#3c3c3c;transform:scaleX(0.9261);">2019</div>
<svg class="ic" style="left:869px;top:706px" width="8" height="8" viewBox="0 0 8 8"><circle cx="4" cy="4" r="2.7" fill="#9fd3f5" stroke="#2d9ee8" stroke-width="1.2"/></svg>
<svg class="ic" style="left:6px;top:725px" width="7" height="10" viewBox="0 0 7 10"><path d="M.3 .5l5.4 4.5-5.4 4.5z" fill="#383838"/></svg>
<svg class="ic" style="left:17px;top:722px" width="16" height="17" viewBox="0 0 16 17"><path d="M1.2 .7h9.3l3 3v11.3H1.2z" fill="#fff" stroke="#c2c2c2" stroke-width="1.3" stroke-linejoin="round"/><path d="M3.2 3.7h5.5M3.2 5.7h7.8M3.2 7.7h7.8M3.2 9.7h7.8M3.2 11.7h7.8" stroke="#a6a6a6" stroke-width=".8"/></svg>
<div class="t" style="left:36.80px;top:723.20px;font-size:15px;color:#3c3c3c;transform:scaleX(0.9904);">Viz-Blocks: Building Visualizations and Documents in the Browser</div>
<div class="t" style="left:534.30px;top:723.20px;font-size:15px;color:#3c3c3c;transform:scaleX(0.9799);">McNeill and Hale</div>
<div class="t" style="left:674.50px;top:723.20px;font-size:15px;color:#3c3c3c;transform:scaleX(0.9261);">2019</div>
<svg class="ic" style="left:869px;top:726px" width="8" height="8" viewBox="0 0 8 8"><circle cx="4" cy="4" r="2.7" fill="#9fd3f5" stroke="#2d9ee8" stroke-width="1.2"/></svg>
<svg class="ic" style="left:6px;top:745px" width="7" height="10" viewBox="0 0 7 10"><path d="M.3 .5l5.4 4.5-5.4 4.5z" fill="#383838"/></svg>
<svg class="ic" style="left:17px;top:742px" width="16" height="17" viewBox="0 0 16 17"><path d="M1.2 .7h9.3l3 3v11.3H1.2z" fill="#fff" stroke="#c2c2c2" stroke-width="1.3" stroke-linejoin="round"/><path d="M3.2 3.7h5.5M3.2 5.7h7.8M3.2 7.7h7.8M3.2 9.7h7.8M3.2 11.7h7.8" stroke="#a6a6a6" stroke-width=".8"/></svg>
<div class="t" style="left:36.80px;top:743.20px;font-size:15px;color:#3c3c3c;transform:scaleX(1.0081);">TPFlow: Progressive Partition and Multidimensional Pattern Extraction …</div>
<div class="t" style="left:534.30px;top:743.20px;font-size:15px;color:#3c3c3c;transform:scaleX(0.9630);">Liu et al.</div>
<div class="t" style="left:674.50px;top:743.20px;font-size:15px;color:#3c3c3c;transform:scaleX(0.9261);">2019</div>
<svg class="ic" style="left:869px;top:746px" width="8" height="8" viewBox="0 0 8 8"><circle cx="4" cy="4" r="2.7" fill="#9fd3f5" stroke="#2d9ee8" stroke-width="1.2"/></svg>
<svg class="ic" style="left:6px;top:765px" width="7" height="10" viewBox="0 0 7 10"><path d="M.3 .5l5.4 4.5-5.4 4.5z" fill="#383838"/></svg>
<svg class="ic" style="left:17px;top:762px" width="16" height="17" viewBox="0 0 16 17"><path d="M1.2 .7h9.3l3 3v11.3H1.2z" fill="#fff" stroke="#c2c2c2" stroke-width="1.3" stroke-linejoin="round"/><path d="M3.2 3.7h4M3.2 5.7h4" stroke="#bbb" stroke-width=".8"/><circle cx="9.3" cy="4.9" r="2.3" fill="#f6d7a8" stroke="#e6ae2a" stroke-width="1"/><path d="M6.5 11.5c0-2.5 1.2-3.8 2.8-3.8s2.8 1.3 2.8 3.8z" fill="#6cc24a"/><circle cx="5.3" cy="8.2" r="2.2" fill="#f6d2ae" stroke="#b57a4a" stroke-width=".9"/><path d="M1.5 15c0-3 1.6-4.3 3.8-4.3s3.8 1.3 3.8 4.3z" fill="#4a9be8"/></svg>
<div class="t" style="left:36.80px;top:763.20px;font-size:15px;color:#3c3c3c;transform:scaleX(1.0046);">A Bayesian Cognition Approach to Improve Data Visualization</div>
<div class="t" style="left:534.30px;top:763.20px;font-size:15px;color:#3c3c3c;transform:scaleX(0.9709);">Kim et al.</div>
<div class="t" style="left:674.50px;top:763.20px;font-size:15px;color:#3c3c3c;transform:scaleX(0.9261);">2019</div>
<svg class="ic" style="left:869px;top:766px" width="8" height="8" viewBox="0 0 8 8"><circle cx="4" cy="4" r="2.7" fill="#9fd3f5" stroke="#2d9ee8" stroke-width="1.2"/></svg>
<svg class="ic" style="left:6px;top:785px" width="7" height="10" viewBox="0 0 7 10"><path d="M.3 .5l5.4 4.5-5.4 4.5z" fill="#383838"/></svg>
<svg class="ic" style="left:17px;top:782px" width="16" height="17" viewBox="0 0 16 17"><path d="M1.2 .7h9.3l3 3v11.3H1.2z" fill="#fff" stroke="#c2c2c2" stroke-width="1.3" stroke-linejoin="round"/><path d="M3.2 3.7h5.5M3.2 5.7h7.8M3.2 7.7h7.8M3.2 9.7h7.8M3.2 11.7h7.8" stroke="#a6a6a6" stroke-width=".8"/></svg>
<div class="t" style="left:36.80px;top:783.20px;font-size:15px;color:#3c3c3c;transform:scaleX(0.9915);">Tea: A High-level Language and Runtime System for Automating Statisti…</div>
<div class="t" style="left:534.30px;top:783.20px;font-size:15px;color:#3c3c3c;transform:scaleX(0.9496);">Jun et al.</div>
<div class="t" style="left:674.50px;top:783.20px;font-size:15px;color:#3c3c3c;transform:scaleX(0.9261);">2019</div>
<svg class="ic" style="left:869px;top:786px" width="8" height="8" viewBox="0 0 8 8"><circle cx="4" cy="4" r="2.7" fill="#9fd3f5" stroke="#2d9ee8" stroke-width="1.2"/></svg>
<svg class="ic" style="left:6px;top:805px" width="7" height="10" viewBox="0 0 7 10"><path d="M.3 .5l5.4 4.5-5.4 4.5z" fill="#383838"/></svg>
<svg class="ic" style="left:17px;top:802px" width="16" height="17" viewBox="0 0 16 17"><path d="M1.2 .7h9.3l3 3v11.3H1.2z" fill="#fff" stroke="#c2c2c2" stroke-width="1.3" stroke-linejoin="round"/><path d="M3.2 3.7h5.5M3.2 5.7h7.8M3.2 7.7h7.8M3.2 9.7h7.8M3.2 11.7h7.8" stroke="#a6a6a6" stroke-width=".8"/></svg>
<div class="t" style="left:36.80px;top:803.20px;font-size:15px;color:#3c3c3c;transform:scaleX(0.9872);">FiberClay: Sculpting Three Dimensional Trajectories to Reveal Structura…</div>
<div class="t" style="left:534.30px;top:803.20px;font-size:15px;color:#3c3c3c;transform:scaleX(1.0006);">Hurter et al.</div>
<div class="t" style="left:674.50px;top:803.20px;font-size:15px;color:#3c3c3c;transform:scaleX(0.9261);">2019</div>
<svg class="ic" style="left:869px;top:806px" width="8" height="8" viewBox="0 0 8 8"><circle cx="4" cy="4" r="2.7" fill="#9fd3f5" stroke="#2d9ee8" stroke-width="1.2"/></svg>
<svg class="ic" style="left:6px;top:825px" width="7" height="10" viewBox="0 0 7 10"><path d="M.3 .5l5.4 4.5-5.4 4.5z" fill="#383838"/></svg>
<svg class="ic" style="left:17px;top:822px" width="16" height="17" viewBox="0 0 16 17"><path d="M1.2 .7h9.3l3 3v11.3H1.2z" fill="#fff" stroke="#c2c2c2" stroke-width="1.3" stroke-linejoin="round"/><path d="M3.2 3.7h5.5M3.2 5.7h7.8M3.2 7.7h7.8M3.2 9.7h7.8M3.2 11.7h7.8" stroke="#a6a6a6" stroke-width=".8"/></svg>
<div class="t" style="left:36.80px;top:823.20px;font-size:15px;color:#3c3c3c;transform:scaleX(1.0014);">In Pursuit of Error: A Survey of Uncertainty Visualization Evaluation</div>
<div class="t" style="left:534.30px;top:823.20px;font-size:15px;color:#3c3c3c;transform:scaleX(0.9782);">Hullman et al.</div>
<div class="t" style="left:674.50px;top:823.20px;font-size:15px;color:#3c3c3c;transform:scaleX(0.9261);">2019</div>
<svg class="ic" style="left:869px;top:826px" width="8" height="8" viewBox="0 0 8 8"><circle cx="4" cy="4" r="2.7" fill="#9fd3f5" stroke="#2d9ee8" stroke-width="1.2"/></svg>
<svg class="ic" style="left:6px;top:845px" width="7" height="10" viewBox="0 0 7 10"><path d="M.3 .5l5.4 4.5-5.4 4.5z" fill="#383838"/></svg>
<svg class="ic" style="left:17px;top:842px" width="16" height="17" viewBox="0 0 16 17"><path d="M1.2 .7h9.3l3 3v11.3H1.2z" fill="#fff" stroke="#c2c2c2" stroke-width="1.3" stroke-linejoin="round"/><path d="M3.2 3.7h4M3.2 5.7h4" stroke="#bbb" stroke-width=".8"/><circle cx="9.3" cy="4.9" r="2.3" fill="#f6d7a8" stroke="#e6ae2a" stroke-width="1"/><path d="M6.5 11.5c0-2.5 1.2-3.8 2.8-3.8s2.8 1.3 2.8 3.8z" fill="#6cc24a"/><circle cx="5.3" cy="8.2" r="2.2" fill="#f6d2ae" stroke="#b57a4a" stroke-width=".9"/><path d="M1.5 15c0-3 1.6-4.3 3.8-4.3s3.8 1.3 3.8 4.3z" fill="#4a9be8"/></svg>
<div class="t" style="left:36.80px;top:843.20px;font-size:15px;color:#3c3c3c;transform:scaleX(0.9869);">VizNet: Towards A Large-Scale Visualization Learning and Benchmarkin…</div>
<div class="t" style="left:534.30px;top:843.20px;font-size:15px;color:#3c3c3c;transform:scaleX(0.9452);">Hu et al.</div>
<div class="t" style="left:674.50px;top:843.20px;font-size:15px;color:#3c3c3c;transform:scaleX(0.9261);">2019</div>
<svg class="ic" style="left:869px;top:846px" width="8" height="8" viewBox="0 0 8 8"><circle cx="4" cy="4" r="2.7" fill="#9fd3f5" stroke="#2d9ee8" stroke-width="1.2"/></svg>
<svg class="ic" style="left:6px;top:865px" width="7" height="10" viewBox="0 0 7 10"><path d="M.3 .5l5.4 4.5-5.4 4.5z" fill="#383838"/></svg>
<svg class="ic" style="left:17px;top:862px" width="16" height="17" viewBox="0 0 16 17"><path d="M1.2 .7h9.3l3 3v11.3H1.2z" fill="#fff" stroke="#c2c2c2" stroke-width="1.3" stroke-linejoin="round"/><path d="M3.2 3.7h4M3.2 5.7h4" stroke="#bbb" stroke-width=".8"/><circle cx="9.3" cy="4.9" r="2.3" fill="#f6d7a8" stroke="#e6ae2a" stroke-width="1"/><path d="M6.5 11.5c0-2.5 1.2-3.8 2.8-3.8s2.8 1.3 2.8 3.8z" fill="#6cc24a"/><circle cx="5.3" cy="8.2" r="2.2" fill="#f6d2ae" stroke="#b57a4a" stroke-width=".9"/><path d="M1.5 15c0-3 1.6-4.3 3.8-4.3s3.8 1.3 3.8 4.3z" fill="#4a9be8"/></svg>
<div class="t" style="left:36.80px;top:863.20px;font-size:15px;color:#3c3c3c;transform:scaleX(1.0050);">VizML: A Machine Learning Approach to Visualization Recommendation</div>
<div class="t" style="left:534.30px;top:863.20px;font-size:15px;color:#3c3c3c;transform:scaleX(0.9452);">Hu et al.</div>
<div class="t" style="left:674.50px;top:863.20px;font-size:15px;color:#3c3c3c;transform:scaleX(0.9261);">2019</div>
<svg class="ic" style="left:869px;top:866px" width="8" height="8" viewBox="0 0 8 8"><circle cx="4" cy="4" r="2.7" fill="#9fd3f5" stroke="#2d9ee8" stroke-width="1.2"/></svg>
<svg class="ic" style="left:6px;top:885px" width="7" height="10" viewBox="0 0 7 10"><path d="M.3 .5l5.4 4.5-5.4 4.5z" fill="#383838"/></svg>
<svg class="ic" style="left:17px;top:882px" width="16" height="17" viewBox="0 0 16 17"><path d="M1.2 .7h9.3l3 3v11.3H1.2z" fill="#fff" stroke="#c2c2c2" stroke-width="1.3" stroke-linejoin="round"/><path d="M3.2 3.7h4M3.2 5.7h4" stroke="#bbb" stroke-width=".8"/><circle cx="9.3" cy="4.9" r="2.3" fill="#f6d7a8" stroke="#e6ae2a" stroke-width="1"/><path d="M6.5 11.5c0-2.5 1.2-3.8 2.8-3.8s2.8 1.3 2.8 3.8z" fill="#6cc24a"/><circle cx="5.3" cy="8.2" r="2.2" fill="#f6d2ae" stroke="#b57a4a" stroke-width=".9"/><path d="M1.5 15c0-3 1.6-4.3 3.8-4.3s3.8 1.3 3.8 4.3z" fill="#4a9be8"/></svg>
<div class="t" style="left:36.80px;top:883.20px;font-size:15px;color:#3c3c3c;transform:scaleX(0.9830);">Languages &amp; Visualizations to Enable Effective End User Programming</div>
<div class="t" style="left:534.30px;top:883.20px;font-size:15px;color:#3c3c3c;transform:scaleX(1.0483);">Hoffswell</div>
<div class="t" style="left:674.50px;top:883.20px;font-size:15px;color:#3c3c3c;transform:scaleX(0.9261);">2019</div>
<svg class="ic" style="left:869px;top:886px" width="8" height="8" viewBox="0 0 8 8"><circle cx="4" cy="4" r="2.7" fill="#9fd3f5" stroke="#2d9ee8" stroke-width="1.2"/></svg>
<svg class="ic" style="left:6px;top:905px" width="7" height="10" viewBox="0 0 7 10"><path d="M.3 .5l5.4 4.5-5.4 4.5z" fill="#383838"/></svg>
<svg class="ic" style="left:17px;top:902px" width="16" height="17" viewBox="0 0 16 17"><path d="M1.2 .7h9.3l3 3v11.3H1.2z" fill="#fff" stroke="#c2c2c2" stroke-width="1.3" stroke-linejoin="round"/><path d="M3.2 3.7h5.5M3.2 5.7h7.8M3.2 7.7h7.8M3.2 9.7h7.8M3.2 11.7h7.8" stroke="#a6a6a6" stroke-width=".8"/></svg>
<div class="t" style="left:36.80px;top:903.20px;font-size:15px;color:#3c3c3c;transform:scaleX(0.9986);">Time-Dependent Flow seen through Approximate Observer Killing Fields</div>
<div class="t" style="left:534.30px;top:903.20px;font-size:15px;color:#3c3c3c;transform:scaleX(0.9866);">Hadwiger et al.</div>
<div class="t" style="left:674.50px;top:903.20px;font-size:15px;color:#3c3c3c;transform:scaleX(0.9261);">2019</div>
<svg class="ic" style="left:869px;top:906px" width="8" height="8" viewBox="0 0 8 8"><circle cx="4" cy="4" r="2.7" fill="#9fd3f5" stroke="#2d9ee8" stroke-width="1.2"/></svg>
</div>
<div class="t" style="left:1429.00px;top:580.21px;font-size:14.75px;color:#3c3c3c;">128 items in this view</div>
</body></html>
